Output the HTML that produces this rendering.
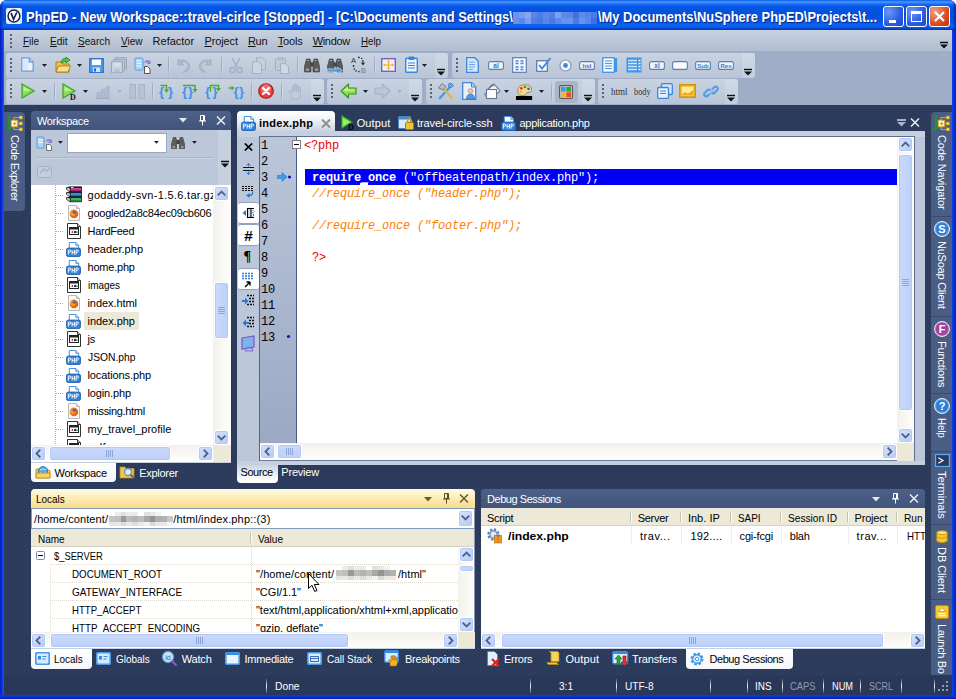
<!DOCTYPE html>
<html><head><meta charset="utf-8"><title>PhpED</title>
<style>
*{box-sizing:border-box;margin:0;padding:0}
html,body{width:956px;height:699px;overflow:hidden;background:#fff}
body{position:relative;font-family:"Liberation Sans",sans-serif;font-size:11px;color:#000}
div,span.p,svg{position:absolute}
.t{white-space:nowrap;line-height:13px;height:13px}
#win{left:0;top:0;width:956px;height:699px;background:linear-gradient(90deg,#0a1cc4 0,#0831d9 2px,#1660ea 4px,#0831d9 5px,#0831d9 951px,#0a3ef0 953px,#0831d9 954px,#001fb0 956px);border-radius:7px 7px 0 0;overflow:hidden}
#title{left:0;top:0;width:956px;height:30px;background:linear-gradient(#0a56e6 0,#3a8cfa 1.5px,#3a8cfa 2.5px,#1568f2 4.5px,#0655e4 7px,#0351dd 14px,#0453e0 21px,#0a62f4 25px,#0a5ef0 27px,#0338b8 29.5px)}
#title .t{top:10px;color:#fff;font-weight:bold;font-size:14px;line-height:16px;height:16px;text-shadow:1px 1px 0 #0a2a80}
.wb{top:6px;width:21px;height:21px;border:1px solid #fff;border-radius:3px;background:radial-gradient(circle at 25% 25%,#6b97f8,#2a5ce0 60%,#1f49c8)}
.wb.c{background:radial-gradient(circle at 25% 25%,#f0a080,#dc4c22 60%,#b83410)}
#client{left:4px;top:30px;width:948px;height:665px;background-color:#2c3a5a;
background-image:radial-gradient(circle at 0.5px 0.5px,#38486b 0.55px,transparent 0.8px),radial-gradient(circle at 0.5px 0.5px,#38486b 0.55px,transparent 0.8px);background-size:4px 4px,4px 4px;background-position:0 0,2px 2px;overflow:hidden}
.solid{background:#2c3b5b}
#menu{left:4px;top:30px;width:948px;height:22px;background:linear-gradient(#c7d1df,#b0bccf)}
.grip{width:2px;background-image:linear-gradient(#56627c 50%,transparent 50%);background-size:2px 4px}
#tbbg{left:4px;top:51px;width:948px;height:54px;background:#a0adc6}
.tg{height:25px;background:linear-gradient(#c9d3e1,#b9c5d7);border-radius:3px}
.ov{width:13px;height:25px;background:linear-gradient(#d0d9e6,#c2cddd);border-radius:0 3px 3px 0}
.sep{width:1px;background:#8e9bb4}
.phdr{height:19px;background:linear-gradient(#4d6088,#41557c);border-radius:4px 4px 0 0;color:#fff}
.phdr.act{background:linear-gradient(#fffbe6,#fce9a9 60%,#f9dc8e);color:#000}
.sbv{width:17px;background:linear-gradient(90deg,#f3f1ec,#fefefb)}
.sbh{height:17px;background:linear-gradient(#f3f1ec,#fefefb)}
.sbtn{width:15px;height:15px;border:1px solid #fff;border-radius:3px;background:linear-gradient(135deg,#d6e1fc,#b7cbf8);box-shadow:inset 0 0 0 1px #b4c8f6}
.thumb{border:1px solid #fff;border-radius:3px;background:linear-gradient(90deg,#cbdafb,#bdd0fa);box-shadow:inset 0 0 0 1px #b4c8f6}
.thumbh{border:1px solid #fff;border-radius:3px;background:linear-gradient(#cbdafb,#bdd0fa);box-shadow:inset 0 0 0 1px #b4c8f6}
.vtab{width:21px;background:#4a5d84;color:#fff}
.vt{transform-origin:0 0;transform:rotate(90deg);color:#fff;white-space:nowrap;line-height:13px;height:13px;font-size:11px}
.code{font-family:"Liberation Mono",monospace;font-size:12px;letter-spacing:-0.2px;white-space:pre;line-height:16px;height:16px}
.ln{font-family:"Liberation Mono",monospace;font-size:12px;letter-spacing:-0.2px;white-space:pre;line-height:16px;height:16px;color:#000}
</style></head><body>
<div id="win">
<div id="client"></div>
<div id="title">
<div style="left:0px;top:0px;width:4px;height:30px;background:linear-gradient(90deg,rgba(0,20,160,.75),rgba(0,40,200,.3) 60%,rgba(0,60,220,0))"></div>
<div style="left:952px;top:0px;width:4px;height:30px;background:linear-gradient(270deg,rgba(0,20,160,.75),rgba(0,40,200,.3) 60%,rgba(0,60,220,0))"></div>
<svg style="left:6px;top:8px" width="16" height="16" viewBox="0 0 17 17"><rect width="17" height="17" rx="2" fill="#e9edf5"/><circle cx="8.5" cy="8.5" r="6.3" fill="#fff" stroke="#15254d" stroke-width="1.6"/><path d="M5.5 5.5 L8 12 L11.5 4.5" fill="none" stroke="#15254d" stroke-width="1.8"/></svg>
<div class="t" style="left:26px;top:9px;transform-origin:0 0;transform:scaleX(0.925);">PhpED - New Workspace::travel-cirlce [Stopped] - [C:\Documents and Settings\</div>
<div class="t" style="left:598px;top:9px;transform-origin:0 0;transform:scaleX(0.922);">\My Documents\NuSphere PhpED\Projects\t...</div>
<div style="left:513px;top:12px;width:84px;height:6px;background:linear-gradient(90deg,#6a92ee 0px,#6a92ee 6px,#7a9cf0 6px,#7a9cf0 12px,#86a6f0 12px,#86a6f0 18px,#5a86ea 18px,#5a86ea 24px,#4a7ee8 24px,#4a7ee8 30px,#5a88ea 30px,#5a88ea 36px,#4f82e8 36px,#4f82e8 42px,#7ea0ee 42px,#7ea0ee 48px,#5f8aea 48px,#5f8aea 54px,#5a86e8 54px,#5a86e8 60px,#3f72e2 60px,#3f72e2 66px,#5f8aea 66px,#5f8aea 72px,#5585e8 72px,#5585e8 78px,#4a7ae6 78px,#4a7ae6 84px)"></div>
<div style="left:513px;top:18px;width:84px;height:6px;background:linear-gradient(90deg,#6a90ec 0px,#6a90ec 6px,#5a86ea 6px,#5a86ea 12px,#7a9cee 12px,#7a9cee 18px,#4f7ee6 18px,#4f7ee6 24px,#4a78e2 24px,#4a78e2 30px,#5a84e6 30px,#5a84e6 36px,#5078e0 36px,#5078e0 42px,#5a88ea 42px,#5a88ea 48px,#6a92ec 48px,#6a92ec 54px,#6a92ec 54px,#6a92ec 60px,#4a7ae4 60px,#4a7ae4 66px,#6a92ec 66px,#6a92ec 72px,#5a88ea 72px,#5a88ea 78px,#3f6ee0 78px,#3f6ee0 84px)"></div>
<div class="wb" style="left:883px"><div style="left:5px;top:13px;width:7px;height:3px;background:#fff"></div></div>
<div class="wb" style="left:906px"><div style="left:4px;top:4px;width:11px;height:11px;border:1px solid #fff;border-top-width:3px"></div></div>
<div class="wb c" style="left:929px"><svg style="left:0;top:0" width="19" height="19" viewBox="0 0 19 19"><path d="M5 5 L14 14 M14 5 L5 14" stroke="#fff" stroke-width="2.2"/></svg></div>
</div>
<div id="menu"></div>
<div class="grip" style="left:10px;top:34px;width:2px;height:14px;"></div>
<div class="t" style="left:23.4px;top:35px;color:#111;font-size:11px;transform-origin:0 0;transform:scaleX(0.901);"><u>F</u>ile</div>
<div class="t" style="left:49.5px;top:35px;color:#111;font-size:11px;transform-origin:0 0;transform:scaleX(0.923);"><u>E</u>dit</div>
<div class="t" style="left:77.7px;top:35px;color:#111;font-size:11px;transform-origin:0 0;transform:scaleX(0.918);"><u>S</u>earch</div>
<div class="t" style="left:121px;top:35px;color:#111;font-size:11px;transform-origin:0 0;transform:scaleX(0.909);"><u>V</u>iew</div>
<div class="t" style="left:152.6px;top:35px;color:#111;font-size:11px;letter-spacing:-0.01px;">Refactor</div>
<div class="t" style="left:204.5px;top:35px;color:#111;font-size:11px;letter-spacing:-0.12px;"><u>P</u>roject</div>
<div class="t" style="left:248px;top:35px;color:#111;font-size:11px;letter-spacing:-0.35px;"><u>R</u>un</div>
<div class="t" style="left:277.7px;top:35px;color:#111;font-size:11px;letter-spacing:-0.17px;"><u>T</u>ools</div>
<div class="t" style="left:312.7px;top:35px;color:#111;font-size:11px;letter-spacing:-0.33px;"><u>W</u>indow</div>
<div class="t" style="left:361px;top:35px;color:#111;font-size:11px;transform-origin:0 0;transform:scaleX(0.883);"><u>H</u>elp</div>
<svg style="left:940px;top:41px" width="9" height="8" viewBox="0 0 9 8"><path d="M0 1.5h8" stroke="#111" stroke-width="1.4"/><path d="M0 3.5h8l-4 4z" fill="#111"/></svg>
<div id="tbbg"></div>
<div class="tg" style="left:6px;top:53px;width:442px;height:25px;"></div>
<div class="ov" style="left:435px;top:53px;width:13px;height:25px;"></div>
<div class="grip" style="left:10px;top:58px;width:2px;height:15px;"></div>
<svg style="left:437px;top:68px" width="9" height="8" viewBox="0 0 9 8"><path d="M0 1.5h8" stroke="#111" stroke-width="1.4"/><path d="M0 3.5h8l-4 4z" fill="#111"/></svg>
<div class="tg" style="left:452px;top:53px;width:303px;height:25px;"></div>
<div class="ov" style="left:742px;top:53px;width:13px;height:25px;"></div>
<div class="grip" style="left:456px;top:58px;width:2px;height:15px;"></div>
<svg style="left:744px;top:68px" width="9" height="8" viewBox="0 0 9 8"><path d="M0 1.5h8" stroke="#111" stroke-width="1.4"/><path d="M0 3.5h8l-4 4z" fill="#111"/></svg>
<div class="tg" style="left:6px;top:79px;width:318px;height:25px;"></div>
<div class="ov" style="left:311px;top:79px;width:13px;height:25px;"></div>
<div class="grip" style="left:10px;top:84px;width:2px;height:15px;"></div>
<svg style="left:313px;top:94px" width="9" height="8" viewBox="0 0 9 8"><path d="M0 1.5h8" stroke="#111" stroke-width="1.4"/><path d="M0 3.5h8l-4 4z" fill="#111"/></svg>
<div class="tg" style="left:327px;top:79px;width:95px;height:25px;"></div>
<div class="ov" style="left:409px;top:79px;width:13px;height:25px;"></div>
<div class="grip" style="left:331px;top:84px;width:2px;height:15px;"></div>
<svg style="left:411px;top:94px" width="9" height="8" viewBox="0 0 9 8"><path d="M0 1.5h8" stroke="#111" stroke-width="1.4"/><path d="M0 3.5h8l-4 4z" fill="#111"/></svg>
<div class="tg" style="left:426px;top:79px;width:169px;height:25px;"></div>
<div class="ov" style="left:582px;top:79px;width:13px;height:25px;"></div>
<div class="grip" style="left:430px;top:84px;width:2px;height:15px;"></div>
<svg style="left:584px;top:94px" width="9" height="8" viewBox="0 0 9 8"><path d="M0 1.5h8" stroke="#111" stroke-width="1.4"/><path d="M0 3.5h8l-4 4z" fill="#111"/></svg>
<div class="tg" style="left:598px;top:79px;width:140px;height:25px;"></div>
<div class="ov" style="left:725px;top:79px;width:13px;height:25px;"></div>
<div class="grip" style="left:602px;top:84px;width:2px;height:15px;"></div>
<svg style="left:727px;top:94px" width="9" height="8" viewBox="0 0 9 8"><path d="M0 1.5h8" stroke="#111" stroke-width="1.4"/><path d="M0 3.5h8l-4 4z" fill="#111"/></svg>
<svg style="left:21px;top:57px" width="13" height="15" viewBox="0 0 15 17"><path d="M1 1h8.500l4.500 4.500V16H1z" fill="#eaf3fd" stroke="#4c8fd9" stroke-width="1.200"/><path d="M9.500 1v4.500H14" fill="#b9d7f7" stroke="#4c8fd9" stroke-width="1.200"/><path d="M2 2h6v13H2z" fill="#cfe3fa" opacity=".6"/></svg>
<svg style="left:42px;top:64px" width="5" height="3" viewBox="0 0 5 3"><path d="M0 0h5l-2.500 3z" fill="#1a1f33"/></svg>
<svg style="left:55px;top:57px" width="16" height="17" viewBox="0 0 16 17"><path d="M1 5h5l1.500 2H14v8H1z" fill="#f0c04a" stroke="#a87c1a" stroke-width=".9"/><path d="M1 15l2.500-6H15.500L13 15z" fill="#fbe08a" stroke="#a87c1a" stroke-width=".9"/><path d="M6 5q1-4 5-3.500V0l4 3-4 3V4.500Q8 4 7.500 6z" fill="#4cc82a" stroke="#1f7a10" stroke-width=".7"/></svg>
<svg style="left:77px;top:64px" width="5" height="3" viewBox="0 0 5 3"><path d="M0 0h5l-2.500 3z" fill="#1a1f33"/></svg>
<svg style="left:89px;top:58px" width="15" height="15" viewBox="0 0 15 15"><path d="M.7 .7h13.600v13.600H.7z" fill="#4f9ff0" stroke="#2f74c8" stroke-width="1.200"/><rect x="3" y="1.500" width="9" height="5.500" fill="#fff"/><rect x="4" y="9.500" width="7" height="4.500" fill="#cfe3fa"/><rect x="5" y="10.500" width="2" height="3" fill="#1f5fb8"/></svg>
<svg style="left:111px;top:57px" width="16" height="16" viewBox="0 0 16 16"><path d="M4.500 .7h11v11h-11z" fill="#bcc6d6" stroke="#98a4ba"/><path d="M2.500 2.700h11v11h-11z" fill="#c3cddd" stroke="#98a4ba"/><path d="M.5 4.700h11v11H.5z" fill="#c8d1df" stroke="#98a4ba"/><rect x="2.500" y="5.500" width="7" height="4" fill="#d6dde8"/><rect x="3.500" y="12" width="5" height="3.500" fill="#b4bfd2"/></svg>
<svg style="left:134px;top:57px" width="17" height="17" viewBox="0 0 17 17"><rect x="1" y="1" width="8" height="12" rx="1.300" fill="#a8d4f5" stroke="#5b9bd5"/><path d="M2.500 4h5M2.500 6.500h5M2.500 9h5" stroke="#eaf5ff"/><path d="M10.500 6c0-3 3-4 5-2l1-1v4h-4l1.500-1.500c-1-1-2.500-.5-2.500 .5z" fill="#8f7fd0"/><path d="M10.500 9.500h3l2.500 2.500v4.500h-5.500z" fill="#fff" stroke="#444" stroke-width=".9"/></svg>
<svg style="left:157px;top:64px" width="5" height="3" viewBox="0 0 5 3"><path d="M0 0h5l-2.500 3z" fill="#1a1f33"/></svg>
<div style="left:168px;top:56px;width:1px;height:19px;background:linear-gradient(#b4bfd2,#95a2bb 50%,#b4bfd2)"></div>
<div style="left:169px;top:56px;width:1px;height:19px;background:linear-gradient(#c4cedd,#d6dde9 50%,#c4cedd)"></div>
<svg style="left:176px;top:58px" width="15" height="15" viewBox="0 0 15 15"><path d="M2 1v6h6L5.500 4.500q3-2 5.500 .5t-1 7l-3 2.500 4.500-1.500q4-4 1-8T4 2.500z" fill="#aeb9cd" stroke="#9aa6bd" stroke-width=".6"/></svg>
<svg style="left:198px;top:58px" width="15" height="15" viewBox="0 0 15 15"><path d="M13 1v6H7l2.500-2.500q-3-2-5.500 .5t1 7l3 2.500-4.500-1.500q-4-4-1-8T11 2.500z" fill="#aeb9cd" stroke="#9aa6bd" stroke-width=".6"/></svg>
<div style="left:221px;top:56px;width:1px;height:19px;background:linear-gradient(#b4bfd2,#95a2bb 50%,#b4bfd2)"></div>
<div style="left:222px;top:56px;width:1px;height:19px;background:linear-gradient(#c4cedd,#d6dde9 50%,#c4cedd)"></div>
<svg style="left:229px;top:57px" width="14" height="17" viewBox="0 0 14 17"><path d="M3 1l5 9M11 1L6 10" stroke="#a4b0c6" stroke-width="1.400" fill="none"/><circle cx="3.500" cy="13" r="2.500" fill="none" stroke="#a4b0c6" stroke-width="1.400"/><circle cx="10.500" cy="13" r="2.500" fill="none" stroke="#a4b0c6" stroke-width="1.400"/></svg>
<svg style="left:252px;top:57px" width="14" height="17" viewBox="0 0 14 17"><path d="M4.500 .7h6l3 3v8.800h-9z" fill="#c6cfdd" stroke="#a4b0c6"/><path d="M.5 4.700h6l3 3v8.800h-9z" fill="#ccd5e2" stroke="#a4b0c6"/></svg>
<svg style="left:275px;top:57px" width="14" height="17" viewBox="0 0 14 17"><rect x=".5" y="1.500" width="10" height="12" rx="1" fill="#c0cad9" stroke="#a4b0c6"/><rect x="3" y=".5" width="5" height="2.500" fill="#b4bfd2" stroke="#a4b0c6" stroke-width=".6"/><path d="M5.500 6.700h5l3 3v6.800h-8z" fill="#d0d8e4" stroke="#a4b0c6"/></svg>
<div style="left:297px;top:56px;width:1px;height:19px;background:linear-gradient(#b4bfd2,#95a2bb 50%,#b4bfd2)"></div>
<div style="left:298px;top:56px;width:1px;height:19px;background:linear-gradient(#c4cedd,#d6dde9 50%,#c4cedd)"></div>
<svg style="left:304px;top:58px" width="16" height="15" viewBox="0 0 16 15"><path d="M2.500 1h3.500l1 3.500v9.500H.5V8zM10 1h3.500l2 7v6H9V4.500z" fill="#5a5a5a" stroke="#3a3a3a" stroke-width=".6"/><rect x="6.500" y="4.500" width="3" height="4" fill="#444"/><rect x="2" y="10.500" width="3" height="2.500" fill="#9a9a9a"/><rect x="11" y="10.500" width="3" height="2.500" fill="#9a9a9a"/><path d="M3 2.500h2M10.500 2.500h2" stroke="#aaa"/></svg>
<svg style="left:327px;top:58px" width="16" height="15" viewBox="0 0 16 15"><path d="M2.500 1h3.500l1 3.500v9.500H.5V8zM10 1h3.500l2 7v6H9V4.500z" fill="#5a5a5a" stroke="#3a3a3a" stroke-width=".6"/><rect x="6.500" y="4.500" width="3" height="4" fill="#444"/><rect x="2" y="10.500" width="3" height="2.500" fill="#9a9a9a"/><rect x="11" y="10.500" width="3" height="2.500" fill="#9a9a9a"/><path d="M3 2.500h2M10.500 2.500h2" stroke="#aaa"/></svg>
<svg style="left:327px;top:67px" width="16" height="7" viewBox="0 0 16 7"><path d="M0 2h10V0l5.500 3.500L10 7V5H0z" fill="#3f9be8" stroke="#fff" stroke-width=".5"/></svg>
<svg style="left:349px;top:56px" width="18" height="18" viewBox="0 0 18 18"><text x="2" y="7" font-family="Liberation Sans,sans-serif" font-size="7.500" fill="#333">A</text><text x="12" y="17" font-family="Liberation Sans,sans-serif" font-size="7.500" fill="#777">B</text><path d="M4.500 9q0 7 6 6.500" stroke="#222" stroke-width="1.300" stroke-dasharray="1.500 1.500" fill="none"/><path d="M9 1.500q5-.5 5 5" stroke="#222" stroke-width="1.300" stroke-dasharray="1.500 1.500" fill="none"/><path d="M12 6.500l2 3 2-3z" fill="#222"/></svg>
<div style="left:374px;top:56px;width:1px;height:19px;background:linear-gradient(#b4bfd2,#95a2bb 50%,#b4bfd2)"></div>
<div style="left:375px;top:56px;width:1px;height:19px;background:linear-gradient(#c4cedd,#d6dde9 50%,#c4cedd)"></div>
<svg style="left:381px;top:58px" width="15" height="14" viewBox="0 0 15 14"><rect x=".7" y=".7" width="13.600" height="12.600" fill="#f3eefa" stroke="#7a62b8" stroke-width="1.400"/><path d="M7.500 3v8M3 7h9" stroke="#e8b020" stroke-width="1.200"/><path d="M7.500 2l-1.500 2h3zM7.500 12l-1.500-2h3zM2 7l2-1.500v3zM13 7l-2-1.500v3z" fill="#e8b020"/></svg>
<svg style="left:405px;top:56px" width="13" height="17" viewBox="0 0 13 17"><rect x=".7" y="2.200" width="11.600" height="14" rx="1" fill="#eaf3fd" stroke="#3f86d8" stroke-width="1.400"/><rect x="3.500" y=".5" width="6" height="3.500" rx="1" fill="#3f86d8"/><path d="M3 7h7M3 9.500h7M3 12h7" stroke="#3f86d8"/></svg>
<svg style="left:422px;top:64px" width="5" height="3" viewBox="0 0 5 3"><path d="M0 0h5l-2.500 3z" fill="#1a1f33"/></svg>
<svg style="left:466px;top:57px" width="13" height="16" viewBox="0 0 13 16"><path d="M.7 .7h8l3.600 3.600v11H.7z" fill="#d6e8fb" stroke="#3f86d8" stroke-width="1.300"/><path d="M3 5h6M3 7.500h6M3 10h6M3 12.500h4" stroke="#6aa6e6"/></svg>
<svg style="left:488px;top:61px" width="16" height="9" viewBox="0 0 16 9"><rect x=".6" y=".6" width="14.800" height="7.800" rx="2" fill="#eef5fd" stroke="#5e7fae" stroke-width="1.100"/><text x="8" y="6.800" text-anchor="middle" font-family="Liberation Sans,sans-serif" font-weight="bold" font-size="6.5" fill="#3a78c8">aI</text></svg>
<svg style="left:512px;top:57px" width="15" height="16" viewBox="0 0 15 16"><rect x=".7" y=".7" width="13.600" height="14.600" fill="#f6f9fd" stroke="#5e7fae" stroke-width="1.200"/><path d="M3.500 4h3M8.500 4h3M3.500 6.500h3M8.500 6.500h3M3.500 10h3M8.500 10h3M3.500 12.500h3M8.500 12.500h3" stroke="#3f86d8" stroke-width="1.300"/></svg>
<svg style="left:536px;top:57px" width="16" height="15" viewBox="0 0 16 15"><rect x=".7" y="3.700" width="10.600" height="10.600" fill="#f6f9fd" stroke="#5e7fae" stroke-width="1.300"/><path d="M3 8l3 3.500L14.500 1" stroke="#3f86d8" stroke-width="1.800" fill="none"/></svg>
<svg style="left:559px;top:59px" width="13" height="13" viewBox="0 0 13 13"><circle cx="6.500" cy="6.500" r="5.500" fill="#f6f9fd" stroke="#8a98b4" stroke-width="1.200"/><circle cx="6.500" cy="6.500" r="2.400" fill="#3f86d8"/></svg>
<svg style="left:579px;top:61px" width="16" height="9" viewBox="0 0 16 9"><rect x=".6" y=".6" width="14.800" height="7.800" rx="2" fill="#eef5fd" stroke="#5e7fae" stroke-width="1.100"/><text x="8" y="6.800" text-anchor="middle" font-family="Liberation Sans,sans-serif" font-weight="bold" font-size="6" fill="#3a78c8">hid</text></svg>
<svg style="left:602px;top:57px" width="16" height="16" viewBox="0 0 16 16"><rect x=".7" y=".7" width="11.600" height="14.600" fill="#f6f9fd" stroke="#3f96e8" stroke-width="1.300"/><path d="M3 4h7M3 6.500h7M3 9h7M3 11.500h7" stroke="#3f96e8" stroke-width="1.200"/><path d="M14 1v14" stroke="#3f96e8" stroke-width="2.200"/></svg>
<svg style="left:626px;top:57px" width="16" height="16" viewBox="0 0 16 16"><rect x=".5" y=".5" width="15" height="15" fill="#3f96e8"/><path d="M2 3.500h9M2 6.500h9M2 9.500h9M2 12.500h9" stroke="#cfe6fb" stroke-width="1.300"/><path d="M12.500 3.500h2M12.500 6.500h2M12.500 9.500h2M12.500 12.500h2" stroke="#fff" stroke-width="1.300"/></svg>
<svg style="left:649px;top:61px" width="16" height="9" viewBox="0 0 16 9"><rect x=".6" y=".6" width="14.800" height="7.800" rx="2" fill="#eef5fd" stroke="#5e7fae" stroke-width="1.100"/><text x="8" y="6.800" text-anchor="middle" font-family="Liberation Sans,sans-serif" font-weight="bold" font-size="6.5" fill="#3a78c8">xI</text></svg>
<svg style="left:672px;top:61px" width="16" height="9" viewBox="0 0 16 9"><rect x=".6" y=".6" width="14.800" height="7.800" rx="2" fill="#fbfcfe" stroke="#5e7fae" stroke-width="1.100"/><text x="8" y="6.800" text-anchor="middle" font-family="Liberation Sans,sans-serif" font-weight="bold" font-size="6" fill="#3a78c8"></text></svg>
<svg style="left:695px;top:61px" width="16" height="9" viewBox="0 0 16 9"><rect x=".6" y=".6" width="14.800" height="7.800" rx="2" fill="#eef5fd" stroke="#5e7fae" stroke-width="1.100"/><text x="8" y="6.800" text-anchor="middle" font-family="Liberation Sans,sans-serif" font-weight="bold" font-size="6" fill="#3a78c8">Sub</text></svg>
<svg style="left:718px;top:61px" width="16" height="9" viewBox="0 0 16 9"><rect x=".6" y=".6" width="14.800" height="7.800" rx="2" fill="#eef5fd" stroke="#5e7fae" stroke-width="1.100"/><text x="8" y="6.800" text-anchor="middle" font-family="Liberation Sans,sans-serif" font-weight="bold" font-size="6" fill="#3a78c8">Res</text></svg>
<svg style="left:21px;top:83px" width="14" height="16" viewBox="0 0 14 16"><path d="M1 1v14l12-7z" fill="#86dc5c" stroke="#47a82a" stroke-width="1.300"/><path d="M2.500 3.500v5l7-1z" fill="#c4f5a8" opacity=".8"/></svg>
<svg style="left:42px;top:90px" width="5" height="3" viewBox="0 0 5 3"><path d="M0 0h5l-2.500 3z" fill="#1a1f33"/></svg>
<div style="left:54px;top:82px;width:1px;height:19px;background:linear-gradient(#b4bfd2,#95a2bb 50%,#b4bfd2)"></div>
<div style="left:55px;top:82px;width:1px;height:19px;background:linear-gradient(#c4cedd,#d6dde9 50%,#c4cedd)"></div>
<svg style="left:62px;top:83px" width="16" height="17" viewBox="0 0 16 17"><path d="M1 1v14l12-7z" fill="#86dc5c" stroke="#47a82a" stroke-width="1.300"/><path d="M2.500 3.500v5l7-1z" fill="#c4f5a8" opacity=".8"/><text x="8" y="16.500" font-family="Liberation Serif,serif" font-weight="bold" font-size="8" fill="#111">D</text></svg>
<svg style="left:83px;top:90px" width="5" height="3" viewBox="0 0 5 3"><path d="M0 0h5l-2.500 3z" fill="#1a1f33"/></svg>
<svg style="left:96px;top:84px" width="15" height="15" viewBox="0 0 15 15"><path d="M1 14V9l3-1v6zM5.500 14V6l3-1v9zM10 14V3l3-1v12z" fill="#b0bbcf" stroke="#a0acc2" stroke-width=".6"/><path d="M0 14.500h14" stroke="#a0acc2"/></svg>
<svg style="left:117px;top:90px" width="5" height="3" viewBox="0 0 5 3"><path d="M0 0h5l-2.500 3z" fill="#a4b0c6"/></svg>
<svg style="left:129px;top:84px" width="17" height="15" viewBox="0 0 17 15"><rect x="1" y=".5" width="5.500" height="14" fill="#b8c2d4" stroke="#a6b2c8"/><rect x="10" y=".5" width="5.500" height="14" fill="#b8c2d4" stroke="#a6b2c8"/></svg>
<div style="left:152px;top:82px;width:1px;height:19px;background:linear-gradient(#b4bfd2,#95a2bb 50%,#b4bfd2)"></div>
<div style="left:153px;top:82px;width:1px;height:19px;background:linear-gradient(#c4cedd,#d6dde9 50%,#c4cedd)"></div>
<svg style="left:159px;top:82px" width="16" height="18" viewBox="0 0 16 18"><text x="0" y="13.500" font-family="Liberation Sans,sans-serif" font-weight="bold" font-size="13" fill="#3a92ee">{</text><text x="9" y="13.500" font-family="Liberation Sans,sans-serif" font-weight="bold" font-size="13" fill="#3a92ee">}</text><path d="M1.500 3.500h6v5" stroke="#4cab2c" stroke-width="1.400" fill="none"/><path d="M5 7.500l2.500 3.500 2.500-3.500z" fill="#4cab2c"/></svg>
<svg style="left:182px;top:82px" width="17" height="18" viewBox="0 0 17 18"><text x="0" y="13.500" font-family="Liberation Sans,sans-serif" font-weight="bold" font-size="13" fill="#3a92ee">{</text><text x="6" y="13.500" font-family="Liberation Sans,sans-serif" font-weight="bold" font-size="13" fill="#3a92ee">}</text><path d="M1 3.500h12v4" stroke="#4cab2c" stroke-width="1.400" fill="none"/><path d="M10.500 7l2.500 3.500 2.500-3.500z" fill="#4cab2c"/></svg>
<svg style="left:204px;top:82px" width="18" height="18" viewBox="0 0 18 18"><text x="1" y="13.500" font-family="Liberation Sans,sans-serif" font-weight="bold" font-size="13" fill="#3a92ee">{</text><text x="8.500" y="13.500" font-family="Liberation Sans,sans-serif" font-weight="bold" font-size="13" fill="#3a92ee">}</text><path d="M6.500 9.500V3.500h8v3" stroke="#4cab2c" stroke-width="1.400" fill="none"/><path d="M12 6l2.500 3.500 2.500-3.500z" fill="#4cab2c"/></svg>
<svg style="left:227px;top:82px" width="18" height="18" viewBox="0 0 18 18"><text x="6.500" y="13.500" font-family="Liberation Sans,sans-serif" font-weight="bold" font-size="13" fill="#3a92ee">{</text><text x="12" y="13.500" font-family="Liberation Sans,sans-serif" font-weight="bold" font-size="13" fill="#3a92ee">}</text><path d="M1.500 6h4" stroke="#4cab2c" stroke-width="1.400" fill="none"/><path d="M4.500 3.500l3 2.500-3 2.500z" fill="#4cab2c"/></svg>
<div style="left:251px;top:82px;width:1px;height:19px;background:linear-gradient(#b4bfd2,#95a2bb 50%,#b4bfd2)"></div>
<div style="left:252px;top:82px;width:1px;height:19px;background:linear-gradient(#c4cedd,#d6dde9 50%,#c4cedd)"></div>
<svg style="left:258px;top:83px" width="16" height="16" viewBox="0 0 16 16"><circle cx="8" cy="8" r="7.300" fill="#e84040" stroke="#a81818" stroke-width="1.100"/><circle cx="8" cy="6" r="5" fill="#f48a8a" opacity=".55"/><path d="M5 5l6 6M11 5l-6 6" stroke="#fff" stroke-width="2.300" stroke-linecap="round"/></svg>
<div style="left:281px;top:82px;width:1px;height:19px;background:linear-gradient(#b4bfd2,#95a2bb 50%,#b4bfd2)"></div>
<div style="left:282px;top:82px;width:1px;height:19px;background:linear-gradient(#c4cedd,#d6dde9 50%,#c4cedd)"></div>
<svg style="left:288px;top:83px" width="15" height="17" viewBox="0 0 15 17"><path d="M3.500 16v-3.500L.8 8.500l1.300-1 2.400 2.500V3q.8-1 1.500 0v5h.6V1.500q.8-1 1.500 0V8h.6V2.500q.8-1 1.500 0V8.500h.6V4.500q.8-1 1.500 0v7.500l-1.500 4z" fill="#c3ccdb" stroke="#a6b2c8" stroke-width=".9"/></svg>
<svg style="left:340px;top:83px" width="17" height="16" viewBox="0 0 17 16"><path d="M1 8l7.500-7v4H16v6H8.500v4z" fill="#8ee04a" stroke="#3a9a1a" stroke-width="1.200" stroke-linejoin="round"/><path d="M3 8l5-4.500V6.500h6.500v1.500z" fill="#d0f5a8" opacity=".8"/></svg>
<svg style="left:363px;top:90px" width="5" height="3" viewBox="0 0 5 3"><path d="M0 0h5l-2.500 3z" fill="#1a1f33"/></svg>
<svg style="left:374px;top:83px" width="17" height="16" viewBox="0 0 17 16"><path d="M16 8L8.500 1v4H1v6h7.500v4z" fill="#bcc6d6" stroke="#a6b2c8" stroke-width="1.200" stroke-linejoin="round"/></svg>
<svg style="left:397px;top:90px" width="5" height="3" viewBox="0 0 5 3"><path d="M0 0h5l-2.500 3z" fill="#a4b0c6"/></svg>
<svg style="left:437px;top:82px" width="18" height="18" viewBox="0 0 18 18"><path d="M3 16L13 5" stroke="#4f9ae6" stroke-width="2.600" stroke-linecap="round"/><path d="M12 1.500q3-1 4.500 2l-2 2-2.500-.5-.5-2.500z" fill="#6ab0f0" stroke="#2a6ab8" stroke-width=".7"/><path d="M15 16L6 6.500" stroke="#e8b83a" stroke-width="2.400" stroke-linecap="round"/><path d="M1.500 6L5 1.500l4 3L6.500 8z" fill="#b8bcc4" stroke="#6a6e78" stroke-width=".8"/></svg>
<svg style="left:462px;top:82px" width="15" height="18" viewBox="0 0 15 18"><path d="M.7 .7h9l4 4v12.600H.7z" fill="#e6f1fd" stroke="#3f86d8" stroke-width="1.300"/><path d="M9.500 .7v4.300h4.300" fill="#b9d7f7" stroke="#3f86d8"/><circle cx="8.500" cy="9" r="2.300" fill="#f0c89a" stroke="#a8784a" stroke-width=".6"/><path d="M4.500 17q0-5 4-5t4 5z" fill="#4f9ae6" stroke="#2a6ab8" stroke-width=".6"/></svg>
<svg style="left:484px;top:83px" width="18" height="17" viewBox="0 0 18 17"><path d="M3.500 6.500L10 1l6 7-5.500 5z" fill="#f4f6fa" stroke="#6a7690" stroke-width="1.100"/><rect x="2.500" y="6.500" width="10" height="9" fill="#fdfdfe" stroke="#6a7690" stroke-width="1.100"/><path d="M.8 9q-1.200 3 .5 4.500t1.500-2z" fill="#4f9ae6"/><path d="M5.500 4.500Q8 0 10 3.500" stroke="#4a5670" fill="none"/></svg>
<svg style="left:504px;top:90px" width="5" height="3" viewBox="0 0 5 3"><path d="M0 0h5l-2.500 3z" fill="#1a1f33"/></svg>
<svg style="left:516px;top:83px" width="17" height="17" viewBox="0 0 19 19"><path d="M2 9q0-7 8-7t7.500 6q-.5 3-4 2.500-2-.3-2 1.500t-3.500 2Q2 14 2 9z" fill="#f2d9a0" stroke="#a8843a" stroke-width="1"/><circle cx="6" cy="6" r="1.500" fill="#e03030"/><circle cx="10" cy="4.500" r="1.500" fill="#30a030"/><circle cx="14" cy="6.500" r="1.500" fill="#3060e0"/><circle cx="5.500" cy="10" r="1.500" fill="#e8c020"/><rect x="0" y="14.500" width="18" height="4.500" fill="#000"/></svg>
<svg style="left:539px;top:90px" width="5" height="3" viewBox="0 0 5 3"><path d="M0 0h5l-2.500 3z" fill="#1a1f33"/></svg>
<div style="left:551px;top:82px;width:1px;height:19px;background:linear-gradient(#b4bfd2,#95a2bb 50%,#b4bfd2)"></div>
<div style="left:552px;top:82px;width:1px;height:19px;background:linear-gradient(#c4cedd,#d6dde9 50%,#c4cedd)"></div>
<div style="left:555px;top:81px;width:23px;height:22px;background:#aab5ca;border-radius:3px"></div>
<svg style="left:559px;top:85px" width="14" height="14" viewBox="0 0 14 14"><rect x=".6" y=".6" width="12.800" height="12.800" rx="1.500" fill="#d8d8d8" stroke="#5a5a5a" stroke-width="1.200"/><rect x="2" y="2" width="4.700" height="4.700" fill="#3a9af0"/><rect x="7.300" y="2" width="4.700" height="4.700" fill="#2aaa3a"/><rect x="2" y="7.300" width="4.700" height="4.700" fill="#f0b828"/><rect x="7.300" y="7.300" width="4.700" height="4.700" fill="#f04a18"/></svg>
<div class="t" style="left:611px;top:85px;font-family:'Liberation Serif',serif;font-size:10.5px;color:#333;transform-origin:0 0;transform:scaleX(0.856);">html</div>
<div class="t" style="left:634px;top:85px;font-family:'Liberation Serif',serif;font-size:10.5px;color:#333;transform-origin:0 0;transform:scaleX(0.786);">body</div>
<svg style="left:657px;top:83px" width="16" height="16" viewBox="0 0 16 16"><rect x="4.500" y=".7" width="10.800" height="10.800" rx="1" fill="#cfe3fa" stroke="#3f86d8" stroke-width="1.300"/><rect x=".7" y="4.500" width="10.800" height="10.800" rx="1" fill="#e6f1fd" stroke="#3f86d8" stroke-width="1.300"/><path d="M3 8h6M3 10.500h6" stroke="#3f86d8"/></svg>
<svg style="left:679px;top:84px" width="17" height="14" viewBox="0 0 17 14"><rect x=".8" y=".8" width="15.400" height="12.400" fill="#f7c83a" stroke="#d8920a" stroke-width="1.600"/><rect x="3" y="3" width="11" height="6" fill="#fdeaa0"/><path d="M3 11l3-3 3 2 5-4v5z" fill="#f0a818"/></svg>
<svg style="left:703px;top:83px" width="17" height="17" viewBox="0 0 17 17"><path d="M7 10.500l-2.500 2.500q-1.500 1-2.700-.2t-.2-2.700L4.500 7q1.500-1 3 .3" stroke="#5a9ae0" stroke-width="2.200" fill="none"/><path d="M10 6.500l2.500-2.500q1.500-1 2.700 .2t.2 2.700L12.500 10q-1.500 1-3-.3" stroke="#5a9ae0" stroke-width="2.200" fill="none" transform="translate(-1 0)"/><path d="M6 11l5-5" stroke="#8abcf0" stroke-width="1.600"/></svg>
<div class="vtab" style="left:4px;top:112px;width:21px;height:99px;border-radius:0 4px 4px 0"></div>
<svg style="left:6px;top:115px" width="17" height="16" viewBox="0 0 17 16"><path d="M1 4.600h2.800M3 4v9.500M1 13.400h4" stroke="#0fa80f" stroke-width="1.500" fill="none"/><rect x="1.900" y=".8" width="2.200" height="2.200" rx=".8" fill="#0fa80f"/><path d="M8 5V2.500h6M11.500 8.500h2.500M8 12v2.500h6" stroke="#cfa030" stroke-width="1.100" fill="none"/><rect x="5.300" y="5.200" width="6.400" height="6.600" fill="#fff08a" stroke="#cfa030" stroke-width="1"/><rect x="5.800" y="5.700" width="2.500" height="5.500" fill="#fffbd0"/><path d="M8.500 7.200v2.800M7.100 8.600h2.800" stroke="#b08a28" stroke-width=".9"/><rect x="13.400" y="1.100" width="2.800" height="2.800" fill="#ffe860" stroke="#cfa030" stroke-width=".8"/><rect x="13.400" y="7.100" width="2.800" height="2.800" fill="#ffe860" stroke="#cfa030" stroke-width=".8"/><rect x="13.400" y="13" width="2.800" height="2.800" fill="#ffe860" stroke="#cfa030" stroke-width=".8"/></svg>
<div class="vt" style="left:21px;top:134.5px;letter-spacing:-0.32px;">Code Explorer</div>
<div class="phdr" style="left:31px;top:111px;width:200px;height:19px;"></div>
<div class="t" style="left:37px;top:115px;color:#fff;font-size:11px;letter-spacing:-0.35px;">Workspace</div>
<svg style="left:179px;top:118px" width="9" height="5" viewBox="0 0 9 5"><path d="M0 0h8l-4 4.500z" fill="#e4e8f0"/></svg>
<svg style="left:199px;top:115px" width="8" height="11" viewBox="0 0 8 11"><path d="M1.500 0.500h4v5h-4zM4.500 .5v5M0 6h7M3.500 6v4.500" stroke="#fff" fill="none"/></svg>
<svg style="left:216px;top:116px" width="10" height="9" viewBox="0 0 10 9"><path d="M1 0.500l8 8M9 .5l-8 8" stroke="#e8ecf4" stroke-width="1.500"/></svg>
<div style="left:31px;top:130px;width:200px;height:55px;background:#bcc7d9"></div>
<div style="left:218px;top:130px;width:13px;height:55px;background:#c6d0df"></div>
<div style="left:37px;top:157px;width:175px;height:1px;background:#a9b5cb"></div>
<div style="left:37px;top:158px;width:175px;height:1px;background:#cdd6e4"></div>
<div style="left:67px;top:133px;width:100px;height:20px;background:#fff;border:1px solid #9aa7bf"></div>
<svg style="left:154px;top:141px" width="5.500" height="3.200" viewBox="0 0 9 5"><path d="M0 0h8l-4 4.500z" fill="#1a1f33"/></svg>
<svg style="left:57.5px;top:141px" width="5.500" height="3.200" viewBox="0 0 9 5"><path d="M0 0h8l-4 4.500z" fill="#1a1f33"/></svg>
<svg style="left:191.5px;top:141px" width="5.500" height="3.200" viewBox="0 0 9 5"><path d="M0 0h8l-4 4.500z" fill="#1a1f33"/></svg>
<svg style="left:221px;top:160px" width="9" height="8" viewBox="0 0 9 8"><path d="M0 1.5h8" stroke="#111" stroke-width="1.4"/><path d="M0 3.5h8l-4 4z" fill="#111"/></svg>
<svg style="left:36px;top:136px" width="17" height="15" viewBox="0 0 17 15"><rect x="1" y="1" width="7" height="11" rx="1" fill="#a8d4f5" stroke="#5b9bd5"/><path d="M2 4h5M2 6.500h5" stroke="#fff"/><path d="M10 6c0-3 3-4 5-2l1-1v4h-4l1.500-1.500c-1-1-2.500-.5-2.500.5z" fill="#8f7fd0"/><path d="M10.500 8.500h3l2 2v4h-5z" fill="#fff" stroke="#555" stroke-width=".8"/></svg>
<svg style="left:170px;top:136px" width="16" height="14" viewBox="0 0 16 14"><path d="M3 1h3l1 3v9H1V8zM10 1h3l2 7v5H9V4z" fill="#5d5d5d"/><rect x="6.500" y="4" width="3" height="4" fill="#444"/><rect x="2.500" y="10" width="2.500" height="2" fill="#999"/><rect x="11" y="10" width="2.500" height="2" fill="#999"/></svg>
<svg style="left:37px;top:164px" width="16" height="15" viewBox="0 0 16 15"><rect x=".5" y="2.500" width="14" height="11" rx="1.500" fill="#c4cedd" stroke="#a6b2c8"/><path d="M3 9l4-4 3 2 3-3" stroke="#a6b2c8" stroke-width="1.500" fill="none"/></svg>
<div style="left:31px;top:185px;width:182px;height:260px;background:#fff;overflow:hidden"></div>
<div style="left:55px;top:185px;width:1px;height:260px;background-image:linear-gradient(#b4b1a6 50%,transparent 50%);background-size:1px 2px"></div>
<div style="left:31px;top:185px;width:182px;height:260px;overflow:hidden">
<div style="left:25px;top:10px;width:8px;height:1px;background-image:linear-gradient(90deg,#b4b1a6 50%,transparent 50%);background-size:2px 1px"></div>
<svg style="left:34px;top:1px" width="18" height="17" viewBox="0 0 18 17"><g transform="translate(0 0.3)"><path d="M1.500 1.500L5 .5h11.500v1.200H5z" fill="#6a0f48" stroke="#111" stroke-width=".7"/><path d="M5 1.700h11.500v3.800H5z" fill="#b01878" stroke="#111" stroke-width=".7"/><path d="M5.500 2.600h10.500" stroke="#f080c0" stroke-width=".9"/><path d="M1.500 1.500L5 1.700v3.800L1.500 3.200z" fill="#fff" stroke="#111" stroke-width=".7"/><path d="M2 2.300l2.800 1.300M2 3l2.800 1.600" stroke="#888" stroke-width=".4"/></g><g transform="translate(0 5.3)"><path d="M1.500 1.500L5 .5h11.500v1.200H5z" fill="#0f3a78" stroke="#111" stroke-width=".7"/><path d="M5 1.700h11.500v3.800H5z" fill="#1a68c8" stroke="#111" stroke-width=".7"/><path d="M5.500 2.600h10.500" stroke="#80c0ff" stroke-width=".9"/><path d="M1.500 1.500L5 1.700v3.800L1.500 3.200z" fill="#fff" stroke="#111" stroke-width=".7"/><path d="M2 2.300l2.800 1.300M2 3l2.800 1.600" stroke="#888" stroke-width=".4"/></g><g transform="translate(0 10.3)"><path d="M1.500 1.500L5 .5h11.500v1.200H5z" fill="#0f5020" stroke="#111" stroke-width=".7"/><path d="M5 1.700h11.500v3.800H5z" fill="#18903a" stroke="#111" stroke-width=".7"/><path d="M5.500 2.600h10.500" stroke="#80e8a0" stroke-width=".9"/><path d="M1.500 1.500L5 1.700v3.800L1.500 3.200z" fill="#fff" stroke="#111" stroke-width=".7"/><path d="M2 2.300l2.800 1.300M2 3l2.800 1.600" stroke="#888" stroke-width=".4"/></g><rect x="6" y="1" width="2.500" height="1" fill="#f0e040"/></svg>
<div class="t" style="left:56.5px;top:4px;font-size:11px;letter-spacing:0.30px;">godaddy-svn-1.5.6.tar.gz</div>
<div style="left:25px;top:28px;width:8px;height:1px;background-image:linear-gradient(90deg,#b4b1a6 50%,transparent 50%);background-size:2px 1px"></div>
<svg style="left:35px;top:20px" width="16" height="16" viewBox="0 0 16 16"><path d="M2.500 .5h8l3 3v12h-11z" fill="#fafafa" stroke="#b9b9b9"/><path d="M10.500 .5v3h3" fill="#e4e4e4" stroke="#b9b9b9"/><circle cx="8" cy="9" r="4.300" fill="#e8641b"/><circle cx="7.300" cy="8.300" r="2.600" fill="#3a6fc4"/><path d="M4 7c1-2 3-3 5-2-2 0-3 1-2.500 2.500C7 9 9 9 9.500 8c.5 2-1 3.500-3 3S3.500 9 4 7z" fill="#f2a024"/></svg>
<div class="t" style="left:56.5px;top:22px;font-size:11px;letter-spacing:-0.24px;">googled2a8c84ec09cb606</div>
<div style="left:25px;top:46px;width:8px;height:1px;background-image:linear-gradient(90deg,#b4b1a6 50%,transparent 50%);background-size:2px 1px"></div>
<svg style="left:35px;top:38px" width="16" height="16" viewBox="0 0 16 16"><path d="M1.500 .5h10l3 3v12h-13z" fill="#fff" stroke="#333"/><path d="M11.500 .5v3h3" fill="#ddd" stroke="#333"/><rect x="3.500" y="4.500" width="9" height="7" fill="#fff" stroke="#222"/><rect x="3.500" y="4.500" width="9" height="2" fill="#222"/><path d="M5 9l2-1.200v2.400z" fill="#d11"/><circle cx="9" cy="9" r="1.200" fill="#22a"/><circle cx="10.800" cy="9.200" r=".9" fill="#2a2"/></svg>
<div class="t" style="left:56.5px;top:40px;font-size:11px;letter-spacing:-0.27px;">HardFeed</div>
<div style="left:25px;top:64px;width:8px;height:1px;background-image:linear-gradient(90deg,#b4b1a6 50%,transparent 50%);background-size:2px 1px"></div>
<svg style="left:35px;top:57px" width="15" height="15" viewBox="0 0 16 16"><path d="M3.500 .5h7l3 3v6h-10z" fill="#fff" stroke="#3b8ad6"/><path d="M10.500 .5v3h3" fill="#cfe5fb" stroke="#3b8ad6"/><rect x=".5" y="6.500" width="15" height="9" rx="2" fill="#2f80d8" stroke="#1f66b8"/><path d="M2.500 13.500v-5h1.500q1 0 1 1.200t-1 1.200h-1.500M6.500 8.500v5M9 8.500v5M6.500 11h2.500M10.700 13.500v-5h1.500q1 0 1 1.200t-1 1.200h-1.500" stroke="#fff" stroke-width="1" fill="none"/></svg>
<div class="t" style="left:56.5px;top:58px;font-size:11px;letter-spacing:0.06px;">header.php</div>
<div style="left:25px;top:82px;width:8px;height:1px;background-image:linear-gradient(90deg,#b4b1a6 50%,transparent 50%);background-size:2px 1px"></div>
<svg style="left:35px;top:75px" width="15" height="15" viewBox="0 0 16 16"><path d="M3.500 .5h7l3 3v6h-10z" fill="#fff" stroke="#3b8ad6"/><path d="M10.500 .5v3h3" fill="#cfe5fb" stroke="#3b8ad6"/><rect x=".5" y="6.500" width="15" height="9" rx="2" fill="#2f80d8" stroke="#1f66b8"/><path d="M2.500 13.500v-5h1.500q1 0 1 1.200t-1 1.200h-1.500M6.500 8.500v5M9 8.500v5M6.500 11h2.500M10.700 13.500v-5h1.500q1 0 1 1.200t-1 1.200h-1.500" stroke="#fff" stroke-width="1" fill="none"/></svg>
<div class="t" style="left:56.5px;top:76px;font-size:11px;letter-spacing:-0.21px;">home.php</div>
<div style="left:25px;top:100px;width:8px;height:1px;background-image:linear-gradient(90deg,#b4b1a6 50%,transparent 50%);background-size:2px 1px"></div>
<svg style="left:35px;top:92px" width="16" height="16" viewBox="0 0 16 16"><path d="M1.500 .5h10l3 3v12h-13z" fill="#fff" stroke="#333"/><path d="M11.500 .5v3h3" fill="#ddd" stroke="#333"/><rect x="3.500" y="4.500" width="9" height="7" fill="#fff" stroke="#222"/><rect x="3.500" y="4.500" width="9" height="2" fill="#222"/><path d="M5 9l2-1.200v2.400z" fill="#d11"/><circle cx="9" cy="9" r="1.200" fill="#22a"/><circle cx="10.800" cy="9.200" r=".9" fill="#2a2"/></svg>
<div class="t" style="left:56.5px;top:94px;font-size:11px;transform-origin:0 0;transform:scaleX(0.902);">images</div>
<div style="left:25px;top:118px;width:8px;height:1px;background-image:linear-gradient(90deg,#b4b1a6 50%,transparent 50%);background-size:2px 1px"></div>
<svg style="left:35px;top:110px" width="16" height="16" viewBox="0 0 16 16"><path d="M2.500 .5h8l3 3v12h-11z" fill="#fafafa" stroke="#b9b9b9"/><path d="M10.500 .5v3h3" fill="#e4e4e4" stroke="#b9b9b9"/><circle cx="8" cy="9" r="4.300" fill="#e8641b"/><circle cx="7.300" cy="8.300" r="2.600" fill="#3a6fc4"/><path d="M4 7c1-2 3-3 5-2-2 0-3 1-2.500 2.500C7 9 9 9 9.500 8c.5 2-1 3.500-3 3S3.500 9 4 7z" fill="#f2a024"/></svg>
<div class="t" style="left:56.5px;top:112px;font-size:11px;letter-spacing:-0.07px;">index.html</div>
<div style="left:25px;top:136px;width:8px;height:1px;background-image:linear-gradient(90deg,#b4b1a6 50%,transparent 50%);background-size:2px 1px"></div>
<svg style="left:35px;top:129px" width="15" height="15" viewBox="0 0 16 16"><path d="M3.500 .5h7l3 3v6h-10z" fill="#fff" stroke="#3b8ad6"/><path d="M10.500 .5v3h3" fill="#cfe5fb" stroke="#3b8ad6"/><rect x=".5" y="6.500" width="15" height="9" rx="2" fill="#2f80d8" stroke="#1f66b8"/><path d="M2.500 13.500v-5h1.500q1 0 1 1.200t-1 1.200h-1.500M6.500 8.500v5M9 8.500v5M6.500 11h2.500M10.700 13.500v-5h1.500q1 0 1 1.200t-1 1.200h-1.500" stroke="#fff" stroke-width="1" fill="none"/></svg>
<div style="left:53px;top:127px;width:55px;height:18px;background:#ece9d8"></div>
<div class="t" style="left:56.5px;top:130px;font-size:11px;letter-spacing:-0.03px;">index.php</div>
<div style="left:25px;top:154px;width:8px;height:1px;background-image:linear-gradient(90deg,#b4b1a6 50%,transparent 50%);background-size:2px 1px"></div>
<svg style="left:35px;top:146px" width="16" height="16" viewBox="0 0 16 16"><path d="M1.500 .5h10l3 3v12h-13z" fill="#fff" stroke="#333"/><path d="M11.500 .5v3h3" fill="#ddd" stroke="#333"/><rect x="3.500" y="4.500" width="9" height="7" fill="#fff" stroke="#222"/><rect x="3.500" y="4.500" width="9" height="2" fill="#222"/><path d="M5 9l2-1.200v2.400z" fill="#d11"/><circle cx="9" cy="9" r="1.200" fill="#22a"/><circle cx="10.800" cy="9.200" r=".9" fill="#2a2"/></svg>
<div class="t" style="left:56.5px;top:148px;font-size:11px;letter-spacing:-0.25px;">js</div>
<div style="left:25px;top:172px;width:8px;height:1px;background-image:linear-gradient(90deg,#b4b1a6 50%,transparent 50%);background-size:2px 1px"></div>
<svg style="left:35px;top:165px" width="15" height="15" viewBox="0 0 16 16"><path d="M3.500 .5h7l3 3v6h-10z" fill="#fff" stroke="#3b8ad6"/><path d="M10.500 .5v3h3" fill="#cfe5fb" stroke="#3b8ad6"/><rect x=".5" y="6.500" width="15" height="9" rx="2" fill="#2f80d8" stroke="#1f66b8"/><path d="M2.500 13.500v-5h1.500q1 0 1 1.200t-1 1.200h-1.500M6.500 8.500v5M9 8.500v5M6.500 11h2.500M10.700 13.500v-5h1.500q1 0 1 1.200t-1 1.200h-1.500" stroke="#fff" stroke-width="1" fill="none"/></svg>
<div class="t" style="left:56.5px;top:166px;font-size:11px;transform-origin:0 0;transform:scaleX(0.936);">JSON.php</div>
<div style="left:25px;top:190px;width:8px;height:1px;background-image:linear-gradient(90deg,#b4b1a6 50%,transparent 50%);background-size:2px 1px"></div>
<svg style="left:35px;top:183px" width="15" height="15" viewBox="0 0 16 16"><path d="M3.500 .5h7l3 3v6h-10z" fill="#fff" stroke="#3b8ad6"/><path d="M10.500 .5v3h3" fill="#cfe5fb" stroke="#3b8ad6"/><rect x=".5" y="6.500" width="15" height="9" rx="2" fill="#2f80d8" stroke="#1f66b8"/><path d="M2.500 13.500v-5h1.500q1 0 1 1.200t-1 1.200h-1.500M6.500 8.500v5M9 8.500v5M6.500 11h2.500M10.700 13.500v-5h1.500q1 0 1 1.200t-1 1.200h-1.500" stroke="#fff" stroke-width="1" fill="none"/></svg>
<div class="t" style="left:56.5px;top:184px;font-size:11px;letter-spacing:-0.10px;">locations.php</div>
<div style="left:25px;top:208px;width:8px;height:1px;background-image:linear-gradient(90deg,#b4b1a6 50%,transparent 50%);background-size:2px 1px"></div>
<svg style="left:35px;top:201px" width="15" height="15" viewBox="0 0 16 16"><path d="M3.500 .5h7l3 3v6h-10z" fill="#fff" stroke="#3b8ad6"/><path d="M10.500 .5v3h3" fill="#cfe5fb" stroke="#3b8ad6"/><rect x=".5" y="6.500" width="15" height="9" rx="2" fill="#2f80d8" stroke="#1f66b8"/><path d="M2.500 13.500v-5h1.500q1 0 1 1.200t-1 1.200h-1.500M6.500 8.500v5M9 8.500v5M6.500 11h2.500M10.700 13.500v-5h1.500q1 0 1 1.200t-1 1.200h-1.500" stroke="#fff" stroke-width="1" fill="none"/></svg>
<div class="t" style="left:56.5px;top:202px;font-size:11px;letter-spacing:-0.14px;">login.php</div>
<div style="left:25px;top:226px;width:8px;height:1px;background-image:linear-gradient(90deg,#b4b1a6 50%,transparent 50%);background-size:2px 1px"></div>
<svg style="left:35px;top:218px" width="16" height="16" viewBox="0 0 16 16"><path d="M2.500 .5h8l3 3v12h-11z" fill="#fafafa" stroke="#b9b9b9"/><path d="M10.500 .5v3h3" fill="#e4e4e4" stroke="#b9b9b9"/><circle cx="8" cy="9" r="4.300" fill="#e8641b"/><circle cx="7.300" cy="8.300" r="2.600" fill="#3a6fc4"/><path d="M4 7c1-2 3-3 5-2-2 0-3 1-2.500 2.500C7 9 9 9 9.500 8c.5 2-1 3.500-3 3S3.500 9 4 7z" fill="#f2a024"/></svg>
<div class="t" style="left:56.5px;top:220px;font-size:11px;letter-spacing:-0.32px;">missing.html</div>
<div style="left:25px;top:244px;width:8px;height:1px;background-image:linear-gradient(90deg,#b4b1a6 50%,transparent 50%);background-size:2px 1px"></div>
<svg style="left:35px;top:236px" width="16" height="16" viewBox="0 0 16 16"><path d="M1.500 .5h10l3 3v12h-13z" fill="#fff" stroke="#333"/><path d="M11.500 .5v3h3" fill="#ddd" stroke="#333"/><rect x="3.500" y="4.500" width="9" height="7" fill="#fff" stroke="#222"/><rect x="3.500" y="4.500" width="9" height="2" fill="#222"/><path d="M5 9l2-1.200v2.400z" fill="#d11"/><circle cx="9" cy="9" r="1.200" fill="#22a"/><circle cx="10.800" cy="9.200" r=".9" fill="#2a2"/></svg>
<div class="t" style="left:56.5px;top:238px;font-size:11px;letter-spacing:-0.00px;">my_travel_profile</div>
<div style="left:25px;top:262px;width:8px;height:1px;background-image:linear-gradient(90deg,#b4b1a6 50%,transparent 50%);background-size:2px 1px"></div>
<svg style="left:35px;top:254px" width="16" height="16" viewBox="0 0 16 16"><path d="M1.500 .5h10l3 3v12h-13z" fill="#fff" stroke="#333"/><path d="M11.500 .5v3h3" fill="#ddd" stroke="#333"/><rect x="3.500" y="4.500" width="9" height="7" fill="#fff" stroke="#222"/><rect x="3.500" y="4.500" width="9" height="2" fill="#222"/><path d="M5 9l2-1.200v2.400z" fill="#d11"/><circle cx="9" cy="9" r="1.200" fill="#22a"/><circle cx="10.800" cy="9.200" r=".9" fill="#2a2"/></svg>
<div class="t" style="left:56.5px;top:256px;font-size:11px;letter-spacing:0.29px;">self</div>
</div>
<div class="sbv" style="left:213px;top:185px;width:17px;height:260px;"></div>
<div class="sbv" style="left:213px;top:186px;width:17px;height:259px;"></div>
<div class="sbtn" style="left:214px;top:186px;width:15px;height:15px;"><svg style="left:2px;top:3px" width="9" height="6" viewBox="0 0 9 6"><path d="M.7 5.300l3.800-3.800 3.800 3.800" stroke="#4d6185" stroke-width="1.800" fill="none"/></svg></div>
<div class="sbtn" style="left:214px;top:430px;width:15px;height:15px;"><svg style="left:2px;top:4px" width="9" height="6" viewBox="0 0 9 6"><path d="M.7 .7l3.800 3.800 3.800-3.800" stroke="#4d6185" stroke-width="1.800" fill="none"/></svg></div>
<div class="thumb" style="left:214px;top:282px;width:15px;height:57px;"><div style="left:3px;top:50%;margin-top:-4px;width:7px;height:8px;background-image:linear-gradient(#8ea5dc 50%,transparent 50%);background-size:7px 2px"></div></div>
<div style="left:230px;top:185px;width:1px;height:260px;background:#fff"></div>
<div style="left:31px;top:445px;width:200px;height:18px;background:#ece9d8"></div>
<div class="sbh" style="left:31px;top:445px;width:182px;height:17px;"></div>
<div class="sbtn" style="left:31px;top:446px;width:15px;height:15px;"><svg style="left:3px;top:2px" width="6" height="9" viewBox="0 0 6 9"><path d="M5.300 .7l-3.800 3.800 3.800 3.800" stroke="#4d6185" stroke-width="1.800" fill="none"/></svg></div>
<div class="sbtn" style="left:198px;top:446px;width:15px;height:15px;"><svg style="left:4px;top:2px" width="6" height="9" viewBox="0 0 6 9"><path d="M.7 .7l3.800 3.800-3.800 3.800" stroke="#4d6185" stroke-width="1.800" fill="none"/></svg></div>
<div class="thumbh" style="left:49px;top:446px;width:122px;height:15px;"><div style="top:3px;left:50%;margin-left:-4px;height:7px;width:8px;background-image:linear-gradient(90deg,#8ea5dc 50%,transparent 50%);background-size:2px 7px"></div></div>
<div style="left:31px;top:462px;width:200px;height:1px;background:#c6d0df"></div>
<div style="left:31px;top:463px;width:85px;height:19px;background:linear-gradient(#fff,#f4f6fa);border-radius:0 0 4px 4px"></div>
<svg style="left:35px;top:464px" width="17" height="16" viewBox="0 0 17 16"><path d="M1 5h11l3 2v7H1z" fill="#f3c64a" stroke="#b88a1a" stroke-width=".8"/><circle cx="8" cy="7" r="4.500" fill="#5aa8e8" stroke="#2a6cb0" stroke-width=".8"/><path d="M5 6q3-2 6 0M5 8.500q3 2 6 0" stroke="#bfe" fill="none" stroke-width=".8"/><path d="M1 9h14v5H1z" fill="#f7d45a" stroke="#b88a1a" stroke-width=".8"/></svg>
<div class="t" style="left:54.6px;top:467px;font-size:11px;letter-spacing:-0.29px;">Workspace</div>
<svg style="left:119px;top:464px" width="17" height="16" viewBox="0 0 17 16"><path d="M1 3h5l1 1.500h8V14H1z" fill="#f3c64a" stroke="#b88a1a" stroke-width=".8"/><circle cx="9" cy="8" r="3.500" fill="#d8f0ff" stroke="#5a8fc0" stroke-width="1.300"/><path d="M11.500 10.500l3.500 3.500" stroke="#6a6a8a" stroke-width="2"/></svg>
<div class="t" style="left:139.2px;top:467px;font-size:11px;color:#fff;letter-spacing:-0.28px;">Explorer</div>
<div class="solid" style="left:237px;top:111px;width:688px;height:21px;"></div>
<div class="solid" style="left:237px;top:465px;width:688px;height:18px;"></div>
<div style="left:237px;top:111px;width:98px;height:21px;background:linear-gradient(#fff,#f1f4f8 40%,#c8d1df);border-radius:4px 4px 0 0"></div>
<div style="left:237px;top:131px;width:688px;height:6px;background:#c6d0df"></div>
<svg style="left:241px;top:116px" width="15" height="15" viewBox="0 0 16 16"><path d="M3.500 .5h7l3 3v6h-10z" fill="#fff" stroke="#3b8ad6"/><path d="M10.500 .5v3h3" fill="#cfe5fb" stroke="#3b8ad6"/><rect x=".5" y="6.500" width="15" height="9" rx="2" fill="#2f80d8" stroke="#1f66b8"/><path d="M2.500 13.500v-5h1.500q1 0 1 1.200t-1 1.200h-1.500M6.500 8.500v5M9 8.500v5M6.500 11h2.500M10.700 13.500v-5h1.500q1 0 1 1.200t-1 1.200h-1.500" stroke="#fff" stroke-width="1" fill="none"/></svg>
<div class="t" style="left:259px;top:117px;font-weight:bold;font-size:11px;letter-spacing:0.26px;">index.php</div>
<svg style="left:321px;top:119px" width="10" height="9" viewBox="0 0 10 9"><path d="M1 0.500l8 8M9 .5l-8 8" stroke="#8e8e8e" stroke-width="2"/></svg>
<svg style="left:340px;top:114px" width="16" height="17" viewBox="0 0 16 17"><path d="M1.500 1.500v13l11-6.500z" fill="#5fd33a" stroke="#2a8a1a"/><path d="M3 4v8l7-4z" fill="#9bea74"/><text x="8" y="16" font-family="Liberation Serif,serif" font-weight="bold" font-size="8" fill="#000">D</text></svg>
<div class="t" style="left:356.7px;top:117px;color:#fff;font-size:11px;letter-spacing:0.11px;">Output</div>
<svg style="left:398px;top:114px" width="17" height="16" viewBox="0 0 17 16"><rect x=".5" y="2.500" width="12" height="12" rx="1" fill="#dbeafa" stroke="#4a86c8"/><rect x=".5" y="2.500" width="12" height="3" fill="#4a86c8"/><rect x="7.500" y="8.500" width="8" height="7" rx="1" fill="#f2c230" stroke="#a87c10"/><path d="M9.500 8.500v-2q2-3.500 4 0v2" stroke="#c9a12a" stroke-width="1.500" fill="none"/></svg>
<div class="t" style="left:417px;top:117px;color:#fff;font-size:11px;letter-spacing:-0.09px;">travel-circle-ssh</div>
<svg style="left:501px;top:116px" width="15" height="15" viewBox="0 0 16 16"><path d="M3.500 .5h7l3 3v6h-10z" fill="#fff" stroke="#3b8ad6"/><path d="M10.500 .5v3h3" fill="#cfe5fb" stroke="#3b8ad6"/><rect x=".5" y="6.500" width="15" height="9" rx="2" fill="#2f80d8" stroke="#1f66b8"/><path d="M2.500 13.500v-5h1.500q1 0 1 1.200t-1 1.200h-1.500M6.500 8.500v5M9 8.500v5M6.500 11h2.500M10.700 13.500v-5h1.500q1 0 1 1.200t-1 1.200h-1.500" stroke="#fff" stroke-width="1" fill="none"/></svg>
<div class="t" style="left:519.5px;top:117px;color:#fff;font-size:11px;letter-spacing:-0.26px;">application.php</div>
<svg style="left:897px;top:119px" width="10" height="8" viewBox="0 0 10 8"><path d="M0 1h9" stroke="#cfd6e4" stroke-width="1.500"/><path d="M0 3h9l-4.500 4.500z" fill="#aab4c8"/></svg>
<svg style="left:910px;top:118px" width="10" height="9" viewBox="0 0 10 9"><path d="M1 0.500l8 8M9 .5l-8 8" stroke="#e8ecf4" stroke-width="1.500"/></svg>
<div style="left:237px;top:137px;width:23px;height:327px;background:#bcc7d9"></div>
<div style="left:259px;top:137px;width:1px;height:324px;background:#52628a"></div>
<div style="left:260px;top:137px;width:36px;height:306px;background:linear-gradient(#bbc6d9,#9ca9c4)"></div>
<div style="left:296px;top:137px;width:1px;height:306px;background:#4a5a88"></div>
<div style="left:297px;top:137px;width:601px;height:306px;background:#fff"></div>
<div style="left:914px;top:137px;width:11px;height:327px;background:#bcc7d9"></div>
<div style="left:237px;top:461px;width:688px;height:4px;background:#c6d0df"></div>
<div style="left:260px;top:460px;width:654px;height:1px;background:#6f7d9c"></div>
<div style="left:259px;top:136px;width:656px;height:1px;background:#5f6f92"></div>
<div style="left:914px;top:136px;width:1px;height:325px;background:#5f6f92"></div>
<div class="ln" style="left:261px;top:138px;">1</div>
<div class="ln" style="left:261px;top:154px;">2</div>
<div class="ln" style="left:261px;top:170px;">3</div>
<div class="ln" style="left:261px;top:186px;">4</div>
<div class="ln" style="left:261px;top:202px;">5</div>
<div class="ln" style="left:261px;top:218px;">6</div>
<div class="ln" style="left:261px;top:234px;">7</div>
<div class="ln" style="left:261px;top:250px;">8</div>
<div class="ln" style="left:261px;top:266px;">9</div>
<div class="ln" style="left:261px;top:282px;">10</div>
<div class="ln" style="left:261px;top:298px;">11</div>
<div class="ln" style="left:261px;top:314px;">12</div>
<div class="ln" style="left:261px;top:330px;">13</div>
<svg style="left:292px;top:140px" width="9" height="9" viewBox="0 0 9 9"><rect x=".5" y=".5" width="8" height="8" fill="#fff" stroke="#808080"/><path d="M2 4.500h5" stroke="#000"/></svg>
<div style="left:305px;top:169px;width:592px;height:16px;background:#0000f6"></div>
<div class="code" style="left:304px;top:138px;color:#f00000">&lt;?php</div>
<div class="code" style="left:312px;top:170px;color:#fff"><b>require_once</b> ("offbeatenpath/index.php");</div>
<div class="code" style="left:312px;top:186px;font-style:italic;color:#ff8000">//require_once ("header.php");</div>
<div class="code" style="left:312px;top:218px;font-style:italic;color:#ff8000">//require_once ("footer.php");</div>
<div class="code" style="left:312px;top:250px;color:#f00000">?&gt;</div>
<div style="left:360px;top:183px;width:8px;height:2px;background:#fff"></div>
<svg style="left:277px;top:172px" width="15" height="10" viewBox="0 0 15 10"><path d="M0 3.500h5V.5l5 4.500-5 4.500v-3H0z" fill="#3f9be8" stroke="#2a78c8" stroke-width=".6"/><circle cx="12.500" cy="5" r="1.600" fill="#1010c0"/></svg>
<svg style="left:286px;top:334px" width="5" height="5" viewBox="0 0 5 5"><circle cx="2.500" cy="2.500" r="1.600" fill="#1010c0"/></svg>
<div class="sbv" style="left:897px;top:137px;width:17px;height:306px;"></div>
<div class="sbtn" style="left:898px;top:137px;width:15px;height:15px;"><svg style="left:2px;top:3px" width="9" height="6" viewBox="0 0 9 6"><path d="M.7 5.300l3.800-3.800 3.800 3.800" stroke="#4d6185" stroke-width="1.800" fill="none"/></svg></div>
<div class="sbtn" style="left:898px;top:428px;width:15px;height:15px;"><svg style="left:2px;top:4px" width="9" height="6" viewBox="0 0 9 6"><path d="M.7 .7l3.800 3.800 3.800-3.800" stroke="#4d6185" stroke-width="1.800" fill="none"/></svg></div>
<div class="thumb" style="left:898px;top:154px;width:15px;height:257px;"><div style="left:3px;top:50%;margin-top:-4px;width:7px;height:8px;background-image:linear-gradient(#8ea5dc 50%,transparent 50%);background-size:7px 2px"></div></div>
<div style="left:897px;top:443px;width:17px;height:18px;background:#ece9d8"></div>
<div class="sbh" style="left:260px;top:443px;width:637px;height:17px;"></div>
<div class="sbtn" style="left:260px;top:444px;width:15px;height:15px;"><svg style="left:3px;top:2px" width="6" height="9" viewBox="0 0 6 9"><path d="M5.300 .7l-3.800 3.800 3.800 3.800" stroke="#4d6185" stroke-width="1.800" fill="none"/></svg></div>
<div class="sbtn" style="left:882px;top:444px;width:15px;height:15px;"><svg style="left:4px;top:2px" width="6" height="9" viewBox="0 0 6 9"><path d="M.7 .7l3.800 3.800-3.800 3.800" stroke="#4d6185" stroke-width="1.800" fill="none"/></svg></div>
<div class="thumbh" style="left:277px;top:444px;width:25px;height:15px;"><div style="top:3px;left:50%;margin-left:-4px;height:7px;width:8px;background-image:linear-gradient(90deg,#8ea5dc 50%,transparent 50%);background-size:2px 7px"></div></div>
<div style="left:238px;top:202px;width:21px;height:22px;background:#fff;border-top:1px solid #8fa3c4;border-bottom:1px solid #8fa3c4;border-radius:3px"></div>
<div style="left:238px;top:224px;width:21px;height:22px;background:#fff;border-top:1px solid #8fa3c4;border-bottom:1px solid #8fa3c4;border-radius:3px"></div>
<div style="left:238px;top:268px;width:21px;height:22px;background:#fff;border-top:1px solid #8fa3c4;border-bottom:1px solid #8fa3c4;border-radius:3px"></div>
<svg style="left:244px;top:143px" width="9" height="8" viewBox="0 0 9 8"><path d="M.8 .5l7.400 7M8.200 .5l-7.400 7" stroke="#000" stroke-width="1.700"/></svg>
<svg style="left:243px;top:163px" width="11" height="12" viewBox="0 0 11 12"><path d="M0 4.500h11M0 7.500h11" stroke="#111" stroke-width="1"/><path d="M5.500 .5v3M3.500 2.500l2-2 2 2M5.500 11.500v-3M3.500 9.500l2 2 2-2" stroke="#2a78d8" stroke-width="1" fill="none"/></svg>
<svg style="left:242px;top:185px" width="13" height="14" viewBox="0 0 13 14"><path d="M0 1.500h11M0 3.500h11M0 5.500h11" stroke="#111" stroke-width="1" stroke-dasharray="2 1"/><path d="M10.500 6.500q1 4-4 4" stroke="#2a78d8" stroke-width="1.300" fill="none"/><path d="M7.500 8l-3.500 2.500 3.500 2.500z" fill="#2a78d8"/></svg>
<svg style="left:242px;top:207px" width="13" height="13" viewBox="0 0 13 13"><path d="M.5 6l3.500-3v6z" fill="#2a78d8"/><rect x="5.500" y="1.500" width="3.500" height="9" fill="#ddd" stroke="#000" stroke-width="1.100"/><path d="M5 1.500h7M5 10.500h7" stroke="#000" stroke-width="1.100"/><path d="M10.500 3l1.500 1.500-1.500 1.500M10.500 6.500l1.500 1.500-1.500 1.500" stroke="#2a78d8" fill="none"/></svg>
<div class="t" style="left:244px;top:230px;font-family:'Liberation Mono',monospace;font-size:15px;line-height:15px;height:15px;font-weight:bold">#</div>
<div class="t" style="left:243.5px;top:250px;font-family:'Liberation Serif',serif;font-size:14px;font-weight:bold">&#182;</div>
<svg style="left:242px;top:272px" width="13" height="16" viewBox="0 0 13 16"><path d="M0 1.500h12M0 4h12M0 6.500h12" stroke="#2a78d8" stroke-width="1.300" stroke-dasharray="2 1"/><path d="M3 15l5-5M8 10h-3.500M8 10v3.500" stroke="#000" stroke-width="1.400" fill="none"/></svg>
<svg style="left:242px;top:294px" width="13" height="14" viewBox="0 0 13 14"><path d="M5 1.500h7M7 4.500h5M7 7.500h5M5 10.500h7" stroke="#111" stroke-width="1.300" stroke-dasharray="2 1"/><path d="M0 6h3v-2.500l3.500 3.500-3.500 3.500V8H0z" fill="#2a78d8"/></svg>
<svg style="left:242px;top:316px" width="13" height="14" viewBox="0 0 13 14"><path d="M5 1.500h7M7 4.500h5M7 7.500h5M5 10.500h7" stroke="#111" stroke-width="1.300" stroke-dasharray="2 1"/><path d="M7 6h-3v-2.500l-3.500 3.500 3.500 3.500V8h3z" fill="#2a78d8"/></svg>
<svg style="left:240px;top:335px" width="17" height="18" viewBox="0 0 17 18"><path d="M2 3l12-2v11l-12 2z" fill="#7fb0f0" stroke="#7a5ac0" stroke-width="1.200"/><path d="M5 16h8l-1-3h-5z" fill="#9fc4f4" stroke="#7a5ac0" stroke-width=".8"/></svg>
<div style="left:237px;top:465px;width:41px;height:18px;background:linear-gradient(#cbd4e2,#fff 85%);border-radius:0 0 4px 4px"></div>
<div class="t" style="left:240.5px;top:466px;font-size:11px;letter-spacing:-0.45px;">Source</div>
<div class="t" style="left:281.3px;top:466px;color:#fff;font-size:11px;letter-spacing:-0.20px;">Preview</div>
<div class="vtab" style="left:931px;top:112px;width:21px;height:104px;border-radius:4px 0 0 0;"></div>
<svg style="left:933px;top:115px" width="17" height="16" viewBox="0 0 17 16"><path d="M1 4.600h2.800M3 4v9.500M1 13.400h4" stroke="#0fa80f" stroke-width="1.500" fill="none"/><rect x="1.900" y=".8" width="2.200" height="2.200" rx=".8" fill="#0fa80f"/><path d="M8 5V2.500h6M11.500 8.500h2.500M8 12v2.500h6" stroke="#cfa030" stroke-width="1.100" fill="none"/><rect x="5.300" y="5.200" width="6.400" height="6.600" fill="#fff08a" stroke="#cfa030" stroke-width="1"/><rect x="5.800" y="5.700" width="2.500" height="5.500" fill="#fffbd0"/><path d="M8.500 7.200v2.800M7.100 8.600h2.800" stroke="#b08a28" stroke-width=".9"/><rect x="13.400" y="1.100" width="2.800" height="2.800" fill="#ffe860" stroke="#cfa030" stroke-width=".8"/><rect x="13.400" y="7.100" width="2.800" height="2.800" fill="#ffe860" stroke="#cfa030" stroke-width=".8"/><rect x="13.400" y="13" width="2.800" height="2.800" fill="#ffe860" stroke="#cfa030" stroke-width=".8"/></svg>
<div class="vt" style="left:948px;top:134.5px;letter-spacing:-0.13px;">Code Navigator</div>
<div class="vtab" style="left:931px;top:217px;width:21px;height:99px;"></div>
<div style="left:931px;top:216px;width:21px;height:1px;background:#3a4a70"></div>
<svg style="left:934px;top:221px" width="16" height="16" viewBox="0 0 16 16"><circle cx="8" cy="8" r="7.500" fill="#4aa0f0" stroke="#e8eef8" stroke-width="1"/><circle cx="8" cy="8" r="6" fill="#1a60c0" opacity=".55"/><text x="8" y="12" text-anchor="middle" font-family="Liberation Sans,sans-serif" font-weight="bold" font-size="11" fill="#fff">S</text></svg>
<div class="vt" style="left:948px;top:240.5px;letter-spacing:-0.24px;">NuSoap Client</div>
<div class="vtab" style="left:931px;top:317px;width:21px;height:76px;"></div>
<div style="left:931px;top:316px;width:21px;height:1px;background:#3a4a70"></div>
<svg style="left:934px;top:321px" width="16" height="16" viewBox="0 0 16 16"><circle cx="8" cy="8" r="7.500" fill="#c060c0" stroke="#e8eef8" stroke-width="1"/><circle cx="8" cy="8" r="6" fill="#803080" opacity=".55"/><text x="8" y="12" text-anchor="middle" font-family="Liberation Sans,sans-serif" font-weight="bold" font-size="11" fill="#fff">F</text></svg>
<div class="vt" style="left:948px;top:340.8px;letter-spacing:-0.15px;">Functions</div>
<div class="vtab" style="left:931px;top:394px;width:21px;height:57px;"></div>
<div style="left:931px;top:393px;width:21px;height:1px;background:#3a4a70"></div>
<svg style="left:934px;top:398px" width="16" height="16" viewBox="0 0 16 16"><circle cx="8" cy="8" r="7.500" fill="#4aa0f0" stroke="#e8eef8" stroke-width="1"/><circle cx="8" cy="8" r="6" fill="#1a60c0" opacity=".55"/><text x="8" y="12" text-anchor="middle" font-family="Liberation Sans,sans-serif" font-weight="bold" font-size="11" fill="#fff">?</text></svg>
<div class="vt" style="left:948px;top:418.4px;transform:rotate(90deg) scaleX(0.884);">Help</div>
<div class="vtab" style="left:931px;top:452px;width:21px;height:72px;"></div>
<div style="left:931px;top:451px;width:21px;height:1px;background:#3a4a70"></div>
<svg style="left:934.5px;top:454px" width="15" height="13" viewBox="0 0 16 14"><rect x=".5" y=".5" width="15" height="13" fill="#2a3a5c" stroke="#58b0ff" stroke-width="1.400"/><path d="M3.500 4l5 3-5 3" stroke="#fff" stroke-width="1.300" fill="none"/></svg>
<div class="vt" style="left:948px;top:471px;letter-spacing:0.08px;">Terminals</div>
<div class="vtab" style="left:931px;top:525px;width:21px;height:74px;"></div>
<div style="left:931px;top:524px;width:21px;height:1px;background:#3a4a70"></div>
<svg style="left:936px;top:530px" width="12" height="14" viewBox="0 0 14 16"><path d="M1 3v10q6 3.500 12 0V3z" fill="#f7c832" stroke="#c8960c"/><ellipse cx="7" cy="3" rx="6" ry="2.300" fill="#fde27a" stroke="#c8960c"/><path d="M1 8q6 3.500 12 0" stroke="#c8960c" fill="none"/></svg>
<div class="vt" style="left:948px;top:546.8px;letter-spacing:-0.06px;">DB Client</div>
<div class="vtab" style="left:931px;top:600px;width:21px;height:76px;"></div>
<div style="left:931px;top:599px;width:21px;height:1px;background:#3a4a70"></div>
<svg style="left:934.5px;top:605px" width="14" height="14" viewBox="0 0 16 16"><rect x=".5" y=".5" width="15" height="15" rx="2" fill="#f7c832" stroke="#c8860c"/><path d="M8 3l4.500 4.500h-9z" fill="#fff6c8" stroke="#c8860c" stroke-width=".8"/><path d="M3.500 9.500h9M3.500 12h9" stroke="#fff6c8" stroke-width="1.500"/></svg>
<div class="vt" style="left:948px;top:623.5px;letter-spacing:-0.33px;">Launch Bo</div>
<div class="phdr act" style="left:31px;top:489px;width:444px;height:19px;"></div>
<div class="t" style="left:36px;top:493px;font-size:11px;transform-origin:0 0;transform:scaleX(0.899);">Locals</div>
<svg style="left:424px;top:497px" width="9" height="5" viewBox="0 0 9 5"><path d="M0 0h8l-4 4.500z" fill="#6b5b32"/></svg>
<svg style="left:443px;top:493px" width="8" height="11" viewBox="0 0 8 11"><path d="M1.500 0.500h4v5h-4zM4.500 .5v5M0 6h7M3.500 6v4.500" stroke="#5b4b28" fill="none"/></svg>
<svg style="left:459px;top:494px" width="10" height="9" viewBox="0 0 10 9"><path d="M1 0.500l8 8M9 .5l-8 8" stroke="#6b5b32" stroke-width="1.500"/></svg>
<div style="left:31px;top:508px;width:444px;height:21px;background:#fff;border:1px solid #7f9db9"></div>
<div class="t" style="left:34px;top:513px;font-size:11px;letter-spacing:0.09px;">/home/content/</div>
<div class="t" style="left:173.3px;top:513px;font-size:11px;letter-spacing:0.15px;">/html/index.php::(3)</div>
<div style="left:109px;top:512px;width:63.8px;height:4px;background:linear-gradient(90deg,#fff 0px,#fff 5.8px,#ececec 5.8px,#ececec 11.6px,#e0e0e0 11.6px,#e0e0e0 17.4px,#ebebeb 17.4px,#ebebeb 23.2px,#ebebeb 23.2px,#ebebeb 29px,#fff 29px,#fff 34.8px,#e0e0e0 34.8px,#e0e0e0 40.6px,#e8e8e8 40.6px,#e8e8e8 46.4px,#f2f2f2 46.4px,#f2f2f2 52.2px,#fff 52.2px,#fff 58px,#fff 58px,#fff 63.8px)"></div>
<div style="left:109px;top:516px;width:63.8px;height:6px;background:linear-gradient(90deg,#c4c4c4 0px,#c4c4c4 5.8px,#c0c0c0 5.8px,#c0c0c0 11.6px,#9a9a9a 11.6px,#9a9a9a 17.4px,#bcbcbc 17.4px,#bcbcbc 23.2px,#b4b4b4 23.2px,#b4b4b4 29px,#bebebe 29px,#bebebe 34.8px,#a8a8a8 34.8px,#a8a8a8 40.6px,#949494 40.6px,#949494 46.4px,#adadad 46.4px,#adadad 52.2px,#b2b2b2 52.2px,#b2b2b2 58px,#c8c8c8 58px,#c8c8c8 63.8px)"></div>
<div style="left:109px;top:522px;width:63.8px;height:4px;background:linear-gradient(90deg,#e4e4e4 0px,#e4e4e4 5.8px,#e8e8e8 5.8px,#e8e8e8 11.6px,#dcdcdc 11.6px,#dcdcdc 17.4px,#e8e8e8 17.4px,#e8e8e8 23.2px,#dedede 23.2px,#dedede 29px,#e8e8e8 29px,#e8e8e8 34.8px,#f2f2f2 34.8px,#f2f2f2 40.6px,#dadada 40.6px,#dadada 46.4px,#e8e8e8 46.4px,#e8e8e8 52.2px,#e8e8e8 52.2px,#e8e8e8 58px,#f4f4f4 58px,#f4f4f4 63.8px)"></div>
<div class="sbtn" style="left:458px;top:510px;width:15px;height:17px;"><svg style="left:2px;top:4px" width="9" height="6" viewBox="0 0 9 6"><path d="M.7 .7l3.800 3.800 3.800-3.800" stroke="#4d6185" stroke-width="1.800" fill="none"/></svg></div>
<div style="left:31px;top:529px;width:444px;height:18px;background:#ece9d8;border-bottom:1px solid #d6d2c2"></div>
<div class="t" style="left:37.7px;top:533px;font-size:11px;transform-origin:0 0;transform:scaleX(0.906);">Name</div>
<div class="t" style="left:257.7px;top:533px;font-size:11px;transform-origin:0 0;transform:scaleX(0.915);">Value</div>
<div style="left:250px;top:533px;width:1px;height:10px;background:#c2bfae"></div>
<div style="left:251px;top:533px;width:1px;height:10px;background:#fff"></div>
<div style="left:31px;top:547px;width:427px;height:85px;background:#fff;overflow:hidden"></div>
<div style="left:31px;top:547px;width:427px;height:85px;overflow:hidden">
<div style="left:19px;top:17px;width:408px;height:1px;background-image:linear-gradient(90deg,#dcd9cc 50%,transparent 50%);background-size:2px 1px"></div>
<div style="left:19px;top:35px;width:408px;height:1px;background-image:linear-gradient(90deg,#dcd9cc 50%,transparent 50%);background-size:2px 1px"></div>
<div style="left:19px;top:53px;width:408px;height:1px;background-image:linear-gradient(90deg,#dcd9cc 50%,transparent 50%);background-size:2px 1px"></div>
<div style="left:19px;top:71px;width:408px;height:1px;background-image:linear-gradient(90deg,#dcd9cc 50%,transparent 50%);background-size:2px 1px"></div>
<div style="left:19px;top:17px;width:1px;height:70px;background-image:linear-gradient(#dcd9cc 50%,transparent 50%);background-size:1px 2px"></div>
<div style="left:220px;top:0px;width:1px;height:90px;background-image:linear-gradient(#dcd9cc 50%,transparent 50%);background-size:1px 2px"></div>
<svg style="left:5px;top:4px" width="9" height="9" viewBox="0 0 9 9"><rect x=".5" y=".5" width="8" height="8" rx="1" fill="#fff" stroke="#7a8aa8"/><path d="M2 4.500h5" stroke="#000"/></svg>
<div class="t" style="left:22.7px;top:3px;font-size:11px;transform-origin:0 0;transform:scaleX(0.850);">$_SERVER</div>
<div class="t" style="left:40.8px;top:21px;font-size:11px;transform-origin:0 0;transform:scaleX(0.887);">DOCUMENT_ROOT</div>
<div class="t" style="left:225px;top:21px;font-size:11px;letter-spacing:0.09px;">"/home/content/</div>
<div class="t" style="left:40.8px;top:39px;font-size:11px;transform-origin:0 0;transform:scaleX(0.911);">GATEWAY_INTERFACE</div>
<div class="t" style="left:225px;top:39px;font-size:11px;letter-spacing:-0.09px;">"CGI/1.1"</div>
<div class="t" style="left:40.8px;top:57px;font-size:11px;transform-origin:0 0;transform:scaleX(0.872);">HTTP_ACCEPT</div>
<div class="t" style="left:225px;top:57px;font-size:11px;letter-spacing:-0.04px;">"text/html,application/xhtml+xml,application/xml</div>
<div class="t" style="left:40.8px;top:75px;font-size:11px;transform-origin:0 0;transform:scaleX(0.884);">HTTP_ACCEPT_ENCODING</div>
<div class="t" style="left:225px;top:75px;font-size:11px;letter-spacing:-0.01px;">"gzip, deflate"</div>
<div class="t" style="left:367px;top:21px;font-size:11px;letter-spacing:0.05px;">/html"</div>
</div>
<div style="left:336px;top:566px;width:60px;height:4px;background:linear-gradient(90deg,#fff 0px,#fff 6px,#ececec 6px,#ececec 12px,#e0e0e0 12px,#e0e0e0 18px,#ebebeb 18px,#ebebeb 24px,#ebebeb 24px,#ebebeb 30px,#fff 30px,#fff 36px,#e0e0e0 36px,#e0e0e0 42px,#e8e8e8 42px,#e8e8e8 48px,#f2f2f2 48px,#f2f2f2 54px,#fff 54px,#fff 60px)"></div>
<div style="left:336px;top:570px;width:60px;height:6px;background:linear-gradient(90deg,#c4c4c4 0px,#c4c4c4 6px,#c0c0c0 6px,#c0c0c0 12px,#9a9a9a 12px,#9a9a9a 18px,#bcbcbc 18px,#bcbcbc 24px,#b4b4b4 24px,#b4b4b4 30px,#bebebe 30px,#bebebe 36px,#a8a8a8 36px,#a8a8a8 42px,#949494 42px,#949494 48px,#adadad 48px,#adadad 54px,#b2b2b2 54px,#b2b2b2 60px)"></div>
<div style="left:336px;top:576px;width:60px;height:4px;background:linear-gradient(90deg,#e4e4e4 0px,#e4e4e4 6px,#e8e8e8 6px,#e8e8e8 12px,#dcdcdc 12px,#dcdcdc 18px,#e8e8e8 18px,#e8e8e8 24px,#dedede 24px,#dedede 30px,#e8e8e8 30px,#e8e8e8 36px,#f2f2f2 36px,#f2f2f2 42px,#dadada 42px,#dadada 48px,#e8e8e8 48px,#e8e8e8 54px,#e8e8e8 54px,#e8e8e8 60px)"></div>
<div style="left:458px;top:547px;width:17px;height:85px;background:#fff"></div>
<div class="sbv" style="left:458px;top:547px;width:17px;height:85px;"></div>
<div class="sbtn" style="left:459px;top:547px;width:15px;height:15px;"><svg style="left:2px;top:3px" width="9" height="6" viewBox="0 0 9 6"><path d="M.7 5.300l3.800-3.800 3.800 3.800" stroke="#4d6185" stroke-width="1.800" fill="none"/></svg></div>
<div class="sbtn" style="left:459px;top:617px;width:15px;height:15px;"><svg style="left:2px;top:4px" width="9" height="6" viewBox="0 0 9 6"><path d="M.7 .7l3.800 3.800 3.800-3.800" stroke="#4d6185" stroke-width="1.800" fill="none"/></svg></div>
<div class="thumb" style="left:459px;top:565px;width:15px;height:7px;"></div>
<div style="left:474px;top:508px;width:1px;height:140px;background:#8a97b4"></div>
<div style="left:31px;top:632px;width:444px;height:16px;background:#ece9d8"></div>
<div class="sbh" style="left:31px;top:632px;width:427px;height:17px;"></div>
<div class="sbtn" style="left:31px;top:633px;width:15px;height:15px;"><svg style="left:3px;top:2px" width="6" height="9" viewBox="0 0 6 9"><path d="M5.300 .7l-3.800 3.800 3.800 3.800" stroke="#4d6185" stroke-width="1.800" fill="none"/></svg></div>
<div class="sbtn" style="left:443px;top:633px;width:15px;height:15px;"><svg style="left:4px;top:2px" width="6" height="9" viewBox="0 0 6 9"><path d="M.7 .7l3.800 3.800-3.800 3.800" stroke="#4d6185" stroke-width="1.800" fill="none"/></svg></div>
<div class="thumbh" style="left:50px;top:633px;width:299px;height:15px;"><div style="top:3px;left:50%;margin-left:-4px;height:7px;width:8px;background-image:linear-gradient(90deg,#8ea5dc 50%,transparent 50%);background-size:2px 7px"></div></div>
<div style="left:31px;top:648px;width:444px;height:1px;background:#c6d0df"></div>
<svg style="left:308px;top:573px" width="12" height="20" viewBox="0 0 12 20"><path d="M.5 .5v15l3.500-3.200 2.700 6.200 2.300-1-2.700-6h4.700z" fill="#fff" stroke="#000"/></svg>
<div style="left:4px;top:675px;width:948px;height:20px;background:#293759"></div>
<div style="left:31px;top:649px;width:61px;height:20px;background:linear-gradient(#fff,#f4f6fa);border-radius:0 0 4px 4px"></div>
<svg style="left:35px;top:652px" width="15" height="13" viewBox="0 0 15 13"><rect x=".7" y=".7" width="13.600" height="11.600" rx="1.500" fill="#d6eafc" stroke="#4a9ae8" stroke-width="1.800"/><path d="M3 4h3v3.500H3z" fill="#3a8ae0"/><path d="M7.500 4.500h4M7.500 7h3" stroke="#3a8ae0" stroke-width="1.200"/></svg>
<div class="t" style="left:54.2px;top:653px;font-size:11px;transform-origin:0 0;transform:scaleX(0.899);">Locals</div>
<svg style="left:96px;top:652px" width="15" height="13" viewBox="0 0 15 13"><rect x=".7" y=".7" width="13.600" height="11.600" rx="1.500" fill="#d6eafc" stroke="#4a9ae8" stroke-width="1.800"/><path d="M3 4h3v3.500H3z" fill="#3a8ae0"/><path d="M7.500 4.500h4M7.500 7h3" stroke="#3a8ae0" stroke-width="1.200"/></svg>
<div class="t" style="left:115.5px;top:653px;color:#fff;font-size:11px;transform-origin:0 0;transform:scaleX(0.904);">Globals</div>
<svg style="left:161px;top:650px" width="17" height="17" viewBox="0 0 17 17"><circle cx="7" cy="7" r="5.500" fill="#cfe6fb" stroke="#6aa0d8" stroke-width="1.300"/><text x="7" y="10" text-anchor="middle" font-size="7" font-family="Liberation Sans,sans-serif" fill="#2a5a9a">id</text><path d="M11 11l4.500 4.500" stroke="#8a5ac8" stroke-width="2.200"/></svg>
<div class="t" style="left:181.8px;top:653px;color:#fff;font-size:11px;letter-spacing:-0.19px;">Watch</div>
<svg style="left:225px;top:652px" width="15" height="13" viewBox="0 0 15 13"><rect x=".7" y=".7" width="13.600" height="11.600" rx="1.500" fill="#eaf4ff" stroke="#4a9ae8" stroke-width="1.800"/><path d="M1 2h13" stroke="#3a8ae0" stroke-width="2"/></svg>
<div class="t" style="left:244.6px;top:653px;color:#fff;font-size:11px;letter-spacing:-0.29px;">Immediate</div>
<svg style="left:307px;top:652px" width="15" height="13" viewBox="0 0 15 13"><rect x=".7" y=".7" width="13.600" height="11.600" rx="1.500" fill="#dcecff" stroke="#4a9ae8" stroke-width="1.800"/><path d="M3.500 4.500h8v5h-8zM3.500 6.500h8" stroke="#3a6ab0" fill="none"/></svg>
<div class="t" style="left:327px;top:653px;color:#fff;font-size:11px;transform-origin:0 0;transform:scaleX(0.909);">Call Stack</div>
<svg style="left:384px;top:650px" width="17" height="17" viewBox="0 0 17 17"><rect x=".7" y=".7" width="13.600" height="11.600" rx="1.500" fill="#dcecff" stroke="#3a8ae0" stroke-width="1.400"/><path d="M1 2h13" stroke="#3a8ae0" stroke-width="2"/><path d="M6 16v-3l-1.500-3 1-.5 1.500 2V6h1.200v4h.6V5.500h1.200V10h.6V6h1.200v4.500h.5V7.500h1.100V13l-1 3z" fill="#f7b21a" stroke="#a86a08" stroke-width=".6"/></svg>
<div class="t" style="left:405px;top:653px;color:#fff;font-size:11px;letter-spacing:-0.31px;">Breakpoints</div>
<div class="phdr" style="left:481px;top:489px;width:444px;height:19px;"></div>
<div class="t" style="left:487px;top:493px;color:#fff;font-size:11px;letter-spacing:-0.45px;">Debug Sessions</div>
<svg style="left:872px;top:497px" width="9" height="5" viewBox="0 0 9 5"><path d="M0 0h8l-4 4.500z" fill="#e4e8f0"/></svg>
<svg style="left:892px;top:493px" width="8" height="11" viewBox="0 0 8 11"><path d="M1.500 0.500h4v5h-4zM4.500 .5v5M0 6h7M3.500 6v4.500" stroke="#fff" fill="none"/></svg>
<svg style="left:909px;top:494px" width="10" height="9" viewBox="0 0 10 9"><path d="M1 0.500l8 8M9 .5l-8 8" stroke="#e8ecf4" stroke-width="1.500"/></svg>
<div style="left:481px;top:508px;width:444px;height:18px;background:#ece9d8;border-bottom:1px solid #d6d2c2"></div>
<div class="t" style="left:487px;top:512px;font-size:11px;letter-spacing:-0.30px;">Script</div>
<div class="t" style="left:637.7px;top:512px;font-size:11px;letter-spacing:-0.28px;">Server</div>
<div style="left:630px;top:512px;width:1px;height:10px;background:#c2bfae"></div>
<div style="left:631px;top:512px;width:1px;height:10px;background:#fff"></div>
<div class="t" style="left:687.9px;top:512px;font-size:11px;letter-spacing:0.03px;">Inb. IP</div>
<div style="left:680px;top:512px;width:1px;height:10px;background:#c2bfae"></div>
<div style="left:681px;top:512px;width:1px;height:10px;background:#fff"></div>
<div class="t" style="left:737.6px;top:512px;font-size:11px;transform-origin:0 0;transform:scaleX(0.901);">SAPI</div>
<div style="left:730px;top:512px;width:1px;height:10px;background:#c2bfae"></div>
<div style="left:731px;top:512px;width:1px;height:10px;background:#fff"></div>
<div class="t" style="left:787.8px;top:512px;font-size:11px;transform-origin:0 0;transform:scaleX(0.921);">Session ID</div>
<div style="left:780px;top:512px;width:1px;height:10px;background:#c2bfae"></div>
<div style="left:781px;top:512px;width:1px;height:10px;background:#fff"></div>
<div class="t" style="left:854.6px;top:512px;font-size:11px;letter-spacing:-0.21px;">Project</div>
<div style="left:847px;top:512px;width:1px;height:10px;background:#c2bfae"></div>
<div style="left:848px;top:512px;width:1px;height:10px;background:#fff"></div>
<div class="t" style="left:904.3px;top:512px;font-size:11px;transform-origin:0 0;transform:scaleX(0.921);">Run</div>
<div style="left:896px;top:512px;width:1px;height:10px;background:#c2bfae"></div>
<div style="left:897px;top:512px;width:1px;height:10px;background:#fff"></div>
<div style="left:481px;top:526px;width:444px;height:106px;background:#fff"></div>
<div style="left:631px;top:527px;width:1px;height:18px;background-image:linear-gradient(#e2dfd2 50%,transparent 50%);background-size:1px 2px"></div>
<div style="left:681px;top:527px;width:1px;height:18px;background-image:linear-gradient(#e2dfd2 50%,transparent 50%);background-size:1px 2px"></div>
<div style="left:731px;top:527px;width:1px;height:18px;background-image:linear-gradient(#e2dfd2 50%,transparent 50%);background-size:1px 2px"></div>
<div style="left:781px;top:527px;width:1px;height:18px;background-image:linear-gradient(#e2dfd2 50%,transparent 50%);background-size:1px 2px"></div>
<div style="left:848px;top:527px;width:1px;height:18px;background-image:linear-gradient(#e2dfd2 50%,transparent 50%);background-size:1px 2px"></div>
<div style="left:897px;top:527px;width:1px;height:18px;background-image:linear-gradient(#e2dfd2 50%,transparent 50%);background-size:1px 2px"></div>
<svg style="left:486px;top:527px" width="17" height="17" viewBox="0 0 17 17"><circle cx="7.500" cy="7.500" r="5" fill="#bcd4ee" stroke="#5a82b8" stroke-width="2.400" stroke-dasharray="2.200 1.700"/><circle cx="7.500" cy="7.500" r="3.500" fill="#dfeaf7" stroke="#5a82b8" stroke-width=".8"/><rect x="8.500" y="8.500" width="3" height="7.500" fill="#f79a1a" stroke="#a85a08" stroke-width=".6"/><rect x="12.500" y="8.500" width="3" height="7.500" fill="#f79a1a" stroke="#a85a08" stroke-width=".6"/></svg>
<div class="t" style="left:507.6px;top:530px;font-weight:bold;font-size:11px;transform-origin:0 0;transform:scaleX(1.105);">/index.php</div>
<div class="t" style="left:640px;top:530px;font-size:11px;letter-spacing:0.55px;">trav...</div>
<div class="t" style="left:690.4px;top:530px;font-size:11px;letter-spacing:0.17px;">192....</div>
<div class="t" style="left:739.6px;top:530px;font-size:11px;letter-spacing:-0.18px;">cgi-fcgi</div>
<div class="t" style="left:789.8px;top:530px;font-size:11px;letter-spacing:-0.27px;">blah</div>
<div class="t" style="left:856.6px;top:530px;font-size:11px;letter-spacing:0.55px;">trav...</div>
<div class="t" style="left:906.8px;top:530px;font-size:11px;transform-origin:0 0;transform:scaleX(0.888);">HTT</div>
<div class="sbh" style="left:481px;top:632px;width:444px;height:17px;"></div>
<div class="sbtn" style="left:481px;top:633px;width:15px;height:15px;"><svg style="left:3px;top:2px" width="6" height="9" viewBox="0 0 6 9"><path d="M5.300 .7l-3.800 3.800 3.800 3.800" stroke="#4d6185" stroke-width="1.800" fill="none"/></svg></div>
<div class="sbtn" style="left:910px;top:633px;width:15px;height:15px;"><svg style="left:4px;top:2px" width="6" height="9" viewBox="0 0 6 9"><path d="M.7 .7l3.800 3.800-3.800 3.800" stroke="#4d6185" stroke-width="1.800" fill="none"/></svg></div>
<div class="thumbh" style="left:501px;top:633px;width:383px;height:15px;"><div style="top:3px;left:50%;margin-left:-4px;height:7px;width:8px;background-image:linear-gradient(90deg,#8ea5dc 50%,transparent 50%);background-size:2px 7px"></div></div>
<div style="left:481px;top:648px;width:444px;height:1px;background:#c6d0df"></div>
<svg style="left:486px;top:651px" width="16" height="16" viewBox="0 0 16 16"><path d="M1.500 .5h7l3 3v11h-10z" fill="#dff0ff" stroke="#3a8ae0"/><path d="M6 8l7 7M13 8l-7 7" stroke="#e02020" stroke-width="2.400"/></svg>
<div class="t" style="left:504px;top:653px;color:#fff;font-size:11px;letter-spacing:-0.27px;">Errors</div>
<svg style="left:545px;top:650px" width="17" height="17" viewBox="0 0 17 17"><path d="M4 1.500h8q2 0 2 2v8h-8v-8q0-2-2-2z" fill="#f7d45a" stroke="#b88a1a" stroke-width=".8"/><path d="M2 12.500h10q0 2 2 2H4q-2 0-2-2z" fill="#f3c64a" stroke="#b88a1a" stroke-width=".8"/></svg>
<div class="t" style="left:565.4px;top:653px;color:#fff;font-size:11px;letter-spacing:0.11px;">Output</div>
<svg style="left:612px;top:650px" width="17" height="17" viewBox="0 0 17 17"><rect x=".7" y="1.700" width="15" height="12" rx="1.500" fill="#dcecff" stroke="#3a8ae0" stroke-width="1.400"/><path d="M1 3h15" stroke="#3a8ae0" stroke-width="2"/><path d="M5 15V9H3l3.500-4L10 9H8v6z" fill="#2aa82a" stroke="#0a680a" stroke-width=".6"/><path d="M11 6v6H9l3.500 4 3.500-4h-2V6z" fill="#e03030" stroke="#801010" stroke-width=".6"/></svg>
<div class="t" style="left:632px;top:653px;color:#fff;font-size:11px;letter-spacing:-0.13px;">Transfers</div>
<div style="left:686px;top:649px;width:107px;height:20px;background:linear-gradient(#fff,#f4f6fa);border-radius:0 0 4px 4px"></div>
<svg style="left:689px;top:651px" width="16" height="16" viewBox="0 0 16 16"><circle cx="8" cy="8" r="5" fill="none" stroke="#3a9ae8" stroke-width="3" stroke-dasharray="2.300 1.600"/><circle cx="8" cy="8" r="4.300" fill="#e8f4ff" stroke="#3a9ae8" stroke-width="1.400"/><circle cx="8" cy="8" r="1.800" fill="#fff" stroke="#3a9ae8"/></svg>
<div class="t" style="left:709.5px;top:653px;font-size:11px;letter-spacing:-0.45px;">Debug Sessions</div>
<div style="left:266px;top:678px;width:1px;height:16px;background:linear-gradient(rgba(200,210,230,0),#dfe5f0 45%,#dfe5f0 55%,rgba(200,210,230,0))"></div>
<div style="left:530px;top:678px;width:1px;height:16px;background:linear-gradient(rgba(200,210,230,0),#dfe5f0 45%,#dfe5f0 55%,rgba(200,210,230,0))"></div>
<div style="left:616px;top:678px;width:1px;height:16px;background:linear-gradient(rgba(200,210,230,0),#dfe5f0 45%,#dfe5f0 55%,rgba(200,210,230,0))"></div>
<div style="left:710px;top:678px;width:1px;height:16px;background:linear-gradient(rgba(200,210,230,0),#dfe5f0 45%,#dfe5f0 55%,rgba(200,210,230,0))"></div>
<div style="left:747px;top:678px;width:1px;height:16px;background:linear-gradient(rgba(200,210,230,0),#dfe5f0 45%,#dfe5f0 55%,rgba(200,210,230,0))"></div>
<div style="left:782px;top:678px;width:1px;height:16px;background:linear-gradient(rgba(200,210,230,0),#dfe5f0 45%,#dfe5f0 55%,rgba(200,210,230,0))"></div>
<div style="left:823px;top:678px;width:1px;height:16px;background:linear-gradient(rgba(200,210,230,0),#dfe5f0 45%,#dfe5f0 55%,rgba(200,210,230,0))"></div>
<div style="left:860px;top:678px;width:1px;height:16px;background:linear-gradient(rgba(200,210,230,0),#dfe5f0 45%,#dfe5f0 55%,rgba(200,210,230,0))"></div>
<div style="left:901px;top:678px;width:1px;height:16px;background:linear-gradient(rgba(200,210,230,0),#dfe5f0 45%,#dfe5f0 55%,rgba(200,210,230,0))"></div>
<div style="left:934px;top:678px;width:1px;height:16px;background:linear-gradient(rgba(200,210,230,0),#dfe5f0 45%,#dfe5f0 55%,rgba(200,210,230,0))"></div>
<div class="t" style="left:274.7px;top:680px;color:#fff;font-size:11px;transform-origin:0 0;transform:scaleX(0.935);">Done</div>
<div class="t" style="left:558.8px;top:680px;color:#fff;font-size:11px;transform-origin:0 0;transform:scaleX(0.915);">3:1</div>
<div class="t" style="left:624.6px;top:680px;color:#fff;font-size:11px;transform-origin:0 0;transform:scaleX(0.917);">UTF-8</div>
<div class="t" style="left:755px;top:680px;color:#fff;font-size:11px;transform-origin:0 0;transform:scaleX(0.905);">INS</div>
<div class="t" style="left:790px;top:680px;color:#8f9bb5;font-size:11px;transform-origin:0 0;transform:scaleX(0.854);">CAPS</div>
<div class="t" style="left:831.5px;top:680px;color:#fff;font-size:11px;transform-origin:0 0;transform:scaleX(0.838);">NUM</div>
<div class="t" style="left:868.6px;top:680px;color:#8f9bb5;font-size:11px;transform-origin:0 0;transform:scaleX(0.818);">SCRL</div>
<svg style="left:938px;top:681px" width="11" height="11" viewBox="0 0 11 11"><path d="M9 0v2M9 4v2M9 8v2M5 4v2M5 8v2M1 8v2" stroke="#8c9ab8" stroke-width="2"/></svg>
<div style="left:0px;top:695px;width:956px;height:4px;background:linear-gradient(#0a3ce4,#0831d9 40%,#001ca8)"></div>
</div>
</body></html>
